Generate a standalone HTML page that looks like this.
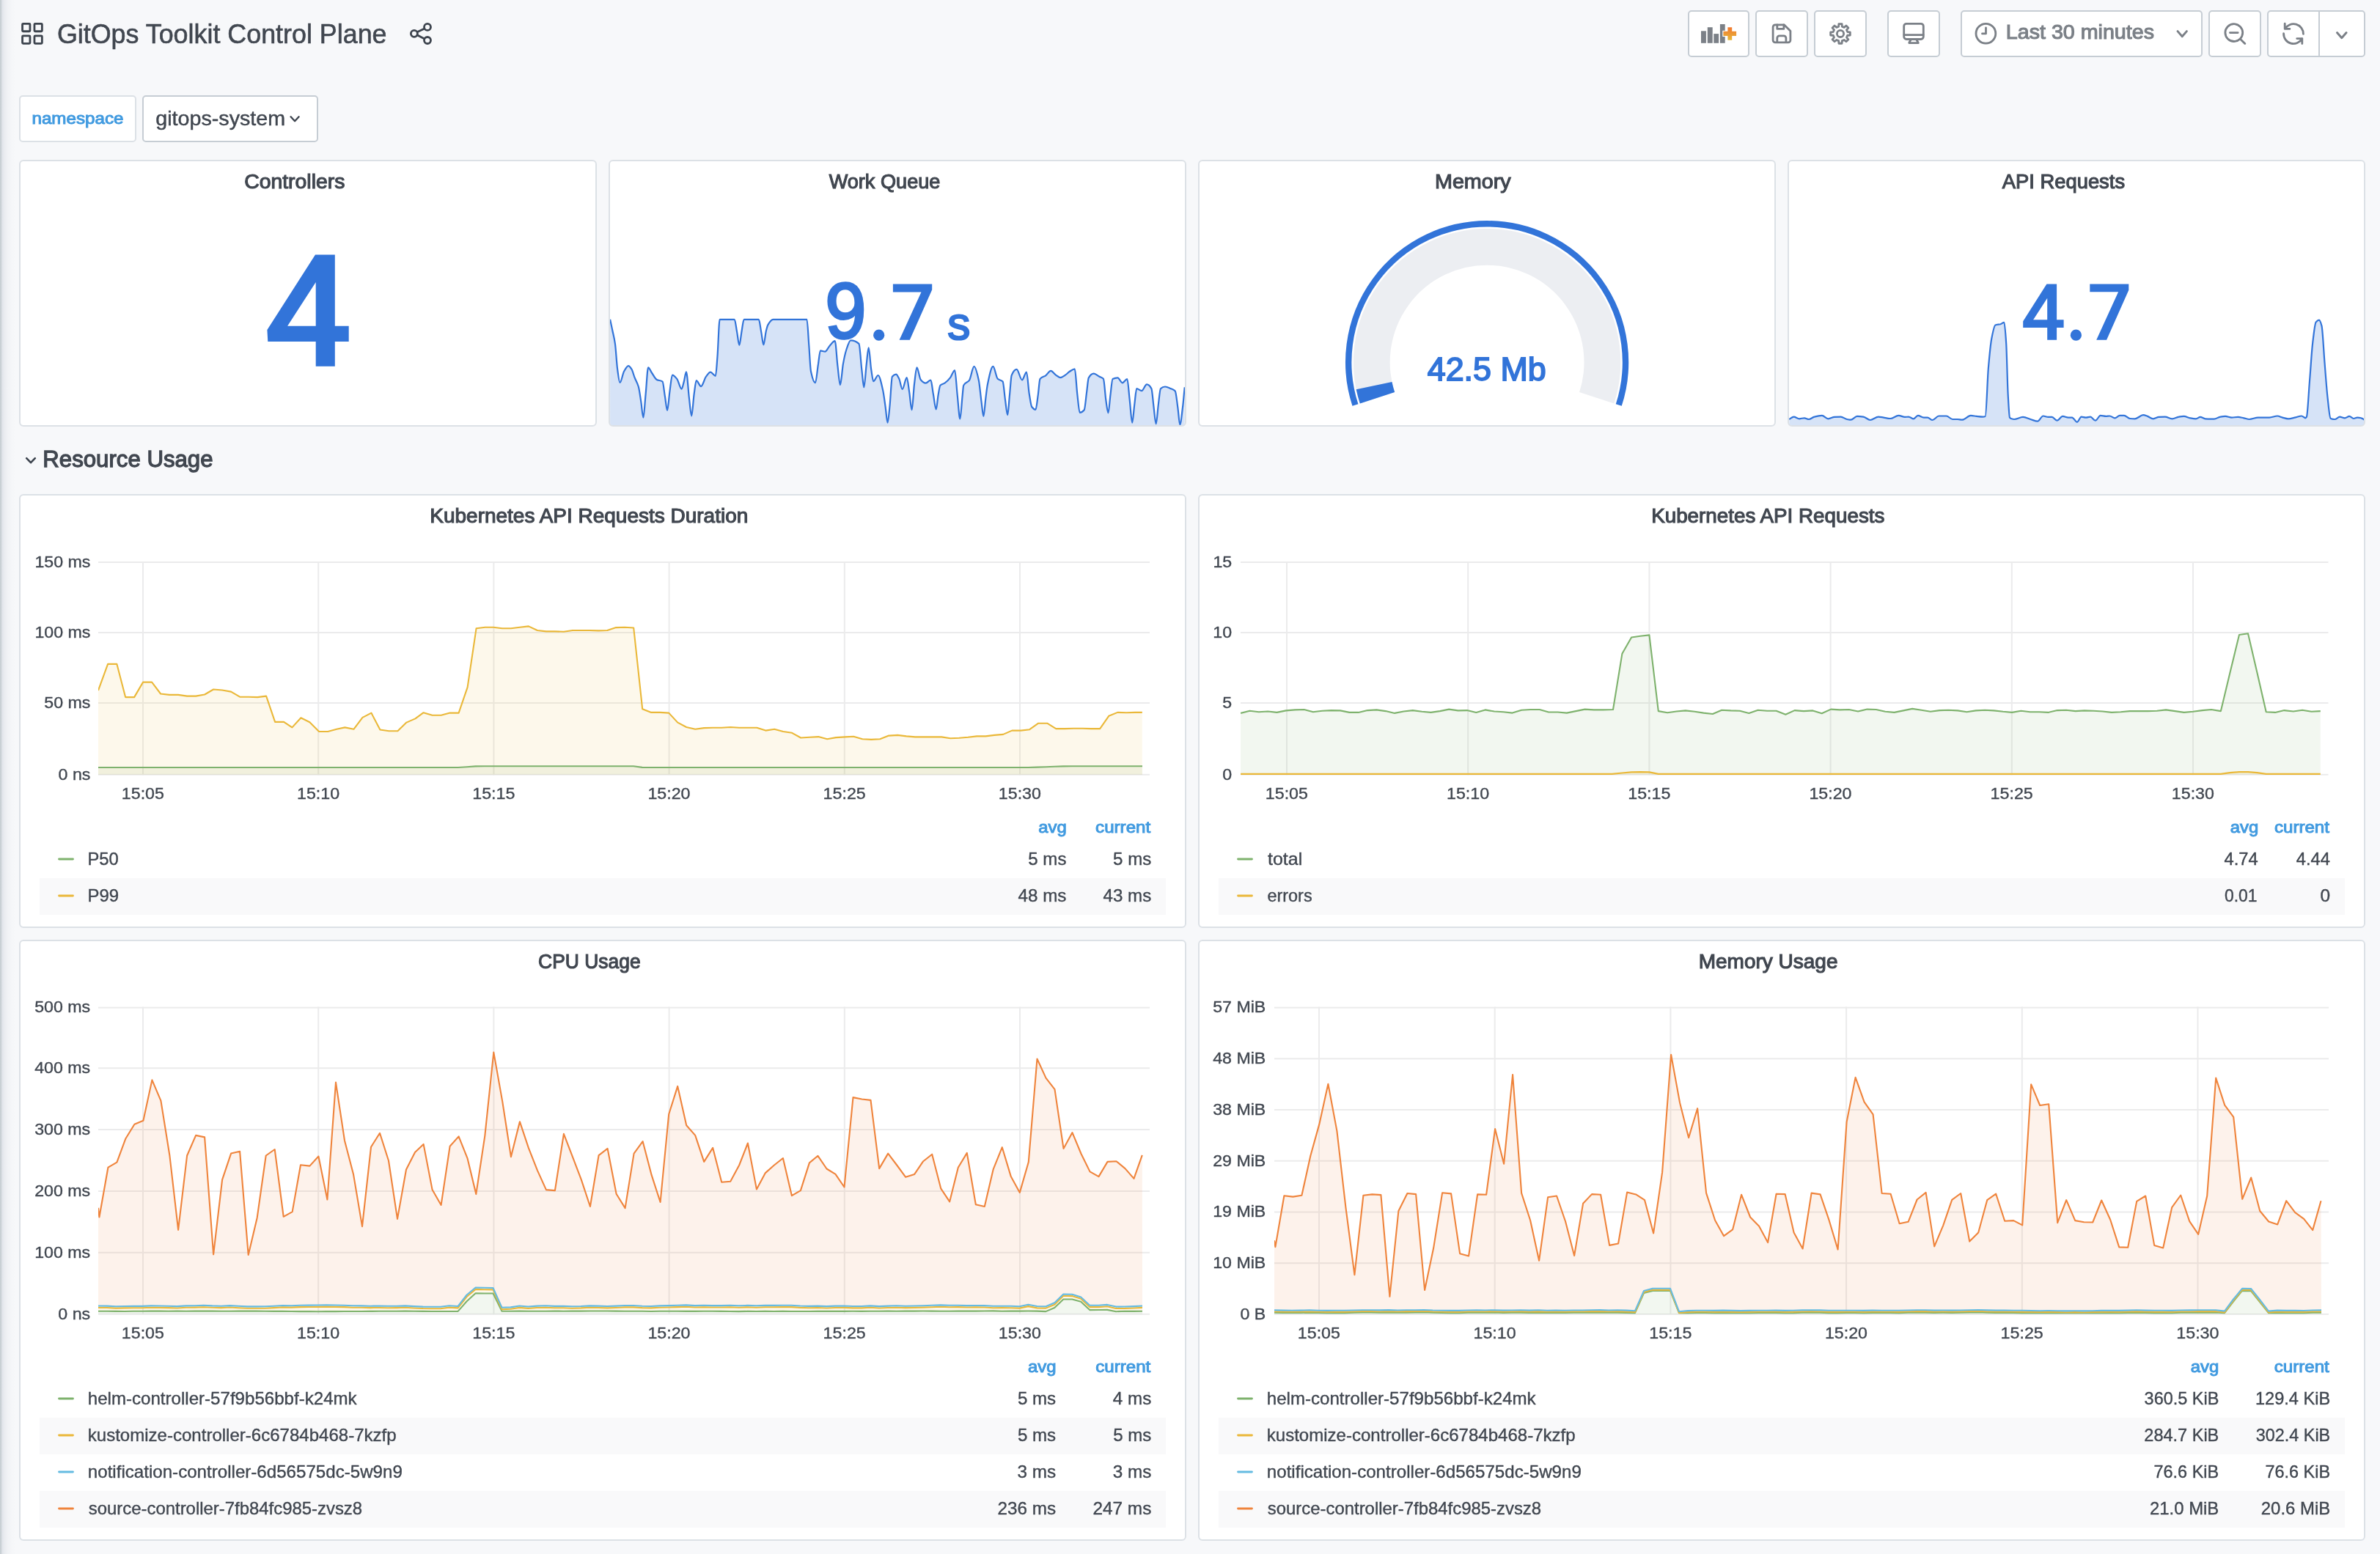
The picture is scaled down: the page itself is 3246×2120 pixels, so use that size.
<!DOCTYPE html>
<html lang="en"><head><meta charset="utf-8"><title>GitOps Toolkit Control Plane - Grafana</title>
<style>
html,body{margin:0;padding:0}
body{width:3246px;height:2120px;overflow:hidden;background:#f7f8fa;font-family:"Liberation Sans",sans-serif;position:relative}
.b{position:absolute;box-sizing:content-box}
.t{position:absolute;left:0;top:0;white-space:nowrap;line-height:1;transform-origin:0 0}
#gfx{position:absolute;left:0;top:0}
#txt{position:absolute;left:0;top:0;width:3246px;height:2120px;will-change:transform}
#edge{position:absolute;left:0;top:0;width:24px;height:2120px;background:linear-gradient(to right,rgba(150,165,172,.48) 0,rgba(150,165,172,.48) 1.5px,rgba(150,162,180,.28) 2.3px,rgba(150,162,180,.16) 5px,rgba(150,162,180,.07) 10px,rgba(150,162,180,.02) 16px,rgba(150,162,180,0) 22px)}
</style></head>
<body>
<div id="edge"></div>
<div class="b" style="left:26px;top:218px;width:784px;height:360px;border:2px solid #dce1e6;background:#fff;border-radius:6px;"></div>
<div class="b" style="left:830px;top:218px;width:784px;height:360px;border:2px solid #dce1e6;background:#fff;border-radius:6px;"></div>
<div class="b" style="left:1634px;top:218px;width:784px;height:360px;border:2px solid #dce1e6;background:#fff;border-radius:6px;"></div>
<div class="b" style="left:2438px;top:218px;width:784px;height:360px;border:2px solid #dce1e6;background:#fff;border-radius:6px;"></div>
<div class="b" style="left:26px;top:674px;width:1588px;height:588px;border:2px solid #dce1e6;background:#fff;border-radius:6px;"></div>
<div class="b" style="left:1634px;top:674px;width:1588px;height:588px;border:2px solid #dce1e6;background:#fff;border-radius:6px;"></div>
<div class="b" style="left:26px;top:1282px;width:1588px;height:816px;border:2px solid #dce1e6;background:#fff;border-radius:6px;"></div>
<div class="b" style="left:1634px;top:1282px;width:1588px;height:816px;border:2px solid #dce1e6;background:#fff;border-radius:6px;"></div>
<div class="b" style="left:2302px;top:14px;width:80px;height:60px;border:2px solid #c6cdd4;background:#fff;border-radius:5px;"></div>
<div class="b" style="left:2394px;top:14px;width:68px;height:60px;border:2px solid #c6cdd4;background:#fff;border-radius:5px;"></div>
<div class="b" style="left:2474px;top:14px;width:68px;height:60px;border:2px solid #c6cdd4;background:#fff;border-radius:5px;"></div>
<div class="b" style="left:2574px;top:14px;width:68px;height:60px;border:2px solid #c6cdd4;background:#fff;border-radius:5px;"></div>
<div class="b" style="left:2674px;top:14px;width:326px;height:60px;border:2px solid #c6cdd4;background:#fff;border-radius:5px;"></div>
<div class="b" style="left:3012px;top:14px;width:68px;height:60px;border:2px solid #c6cdd4;background:#fff;border-radius:5px;"></div>
<div class="b" style="left:3092px;top:14px;width:130px;height:60px;border:2px solid #c6cdd4;background:#fff;border-radius:5px;"></div>
<div class="b" style="left:26px;top:130px;width:156px;height:60px;border:2px solid #dce1e6;background:#fff;border-radius:5px;"></div>
<div class="b" style="left:194px;top:130px;width:236px;height:60px;border:2px solid #c6cdd4;background:#fff;border-radius:5px;"></div>
<div class="b" style="left:54px;top:1198px;width:1536px;height:50px;background:#f9f9fa"></div>
<div class="b" style="left:1662px;top:1198px;width:1536px;height:50px;background:#f9f9fa"></div>
<div class="b" style="left:54px;top:1934px;width:1536px;height:50px;background:#f9f9fa"></div>
<div class="b" style="left:54px;top:2034px;width:1536px;height:50px;background:#f9f9fa"></div>
<div class="b" style="left:1662px;top:1934px;width:1536px;height:50px;background:#f9f9fa"></div>
<div class="b" style="left:1662px;top:2034px;width:1536px;height:50px;background:#f9f9fa"></div>
<svg id="gfx" width="3246" height="2120" viewBox="0 0 3246 2120">
<rect x="30.55" y="32.35" width="10.4" height="10.4" rx="1" fill="none" stroke="#3d444e" stroke-width="2.8"/>
<rect x="46.95" y="32.35" width="10.4" height="10.4" rx="1" fill="none" stroke="#3d444e" stroke-width="2.8"/>
<rect x="30.55" y="48.95" width="10.4" height="10.4" rx="1" fill="none" stroke="#3d444e" stroke-width="2.8"/>
<rect x="46.95" y="48.95" width="10.4" height="10.4" rx="1" fill="none" stroke="#3d444e" stroke-width="2.8"/>
<g fill="none" stroke="#3d444e" stroke-width="2.8"><circle cx="583" cy="36.9" r="4.5"/><circle cx="564.9" cy="45.8" r="4.5"/><circle cx="583" cy="55" r="4.5"/><path d="M568.9 43.8L579 38.9M568.9 47.8L579 53"/></g>
<rect x="3162" y="16" width="2" height="60" fill="#c6cdd4"/>
<g fill="#7b8087"><rect x="2320" y="42.3" width="6.9" height="16.5"/><rect x="2328.8" y="37.2" width="6.9" height="21.6"/><rect x="2337.3" y="46.1" width="6.8" height="12.7"/><rect x="2345.9" y="33" width="6.8" height="25.8"/></g>
<defs><linearGradient id="og" x1="0" y1="0" x2="0" y2="1"><stop offset="0" stop-color="#f2762d"/><stop offset="1" stop-color="#e6b93b"/></linearGradient></defs>
<path d="M2356.4 37.2h5.8v5.6h5.9v6.2h-5.9v5.8h-5.8v-5.8h-6v-6.2h6z" fill="url(#og)" stroke="#fff" stroke-width="2.2" paint-order="stroke"/>
<g fill="none" stroke="#7b8087" stroke-width="2.8" stroke-linejoin="round" stroke-linecap="round"><path d="M2421.1 33.9h12.4l8.4 8.4v12.5a3 3 0 0 1-3 3h-17.8a3 3 0 0 1-3-3v-17.9a3 3 0 0 1 3-3z"/><path d="M2423.8 57.6v-5.8a3 3 0 0 1 3-3h6.1a3 3 0 0 1 3 3v5.8"/><path d="M2423.8 34v5.4h9.1v-5.4"/></g>
<path d="M2523.33 43.79 L2523.33 48.01 L2519.72 48.23 L2518.53 51.12 L2520.92 53.84 L2517.94 56.82 L2515.22 54.43 L2512.33 55.62 L2512.11 59.23 L2507.89 59.23 L2507.67 55.62 L2504.78 54.43 L2502.06 56.82 L2499.08 53.84 L2501.47 51.12 L2500.28 48.23 L2496.67 48.01 L2496.67 43.79 L2500.28 43.57 L2501.47 40.68 L2499.08 37.96 L2502.06 34.98 L2504.78 37.37 L2507.67 36.18 L2507.89 32.57 L2512.11 32.57 L2512.33 36.18 L2515.22 37.37 L2517.94 34.98 L2520.92 37.96 L2518.53 40.68 L2519.72 43.57Z" fill="none" stroke="#7b8087" stroke-width="2.8" stroke-linejoin="round"/>
<circle cx="2510" cy="45.9" r="4.6" fill="none" stroke="#7b8087" stroke-width="2.8"/>
<g fill="none" stroke="#7b8087" stroke-width="2.8" stroke-linejoin="round" stroke-linecap="round"><rect x="2596.7" y="32.3" width="26.6" height="21.2" rx="3.4"/><path d="M2597 47.6h26"/><path d="M2603.9 58.7h12.4M2606 54.4l-2.2 3.6M2614 54.4l2.2 3.6"/></g>
<g fill="none" stroke="#7b8087" stroke-width="2.8" stroke-linecap="round" stroke-linejoin="round"><circle cx="2708.4" cy="45.8" r="13.4"/><path d="M2708.5 37.9v8h-5"/></g>
<path d="M2970.0 42.6L2976.2 49.8L2982.4 42.6" fill="none" stroke="#7b8087" stroke-width="2.9" stroke-linecap="round" stroke-linejoin="round"/>
<g fill="none" stroke="#7b8087" stroke-width="2.8" stroke-linecap="round"><circle cx="3046.8" cy="44.6" r="11.9"/><path d="M3041.4 44.6h10.8M3055.4 53.2l6.4 6.4"/></g>
<g fill="none" stroke="#7b8087" stroke-width="2.8" stroke-linecap="round" stroke-linejoin="round"><path d="M3116.4 39.4A13.4 13.4 0 0 1 3141.4 46.4M3116.2 32.2V39.4H3122.9"/><path d="M3114.6 45.6A13.4 13.4 0 0 0 3139.8 52.5M3132.7 52.6H3139.8V59.6"/></g>
<path d="M3187.5 44.5L3193.8 51.7L3200.1 44.5" fill="none" stroke="#7b8087" stroke-width="2.9" stroke-linecap="round" stroke-linejoin="round"/>
<path d="M396.6 159.3L402.1 165.2L407.6 159.3" fill="none" stroke="#3d444e" stroke-width="2.4" stroke-linecap="round" stroke-linejoin="round"/>
<path d="M36.2 625.2L42.0 631.2L47.8 625.2" fill="none" stroke="#3d444e" stroke-width="2.6" stroke-linecap="round" stroke-linejoin="round"/>
<path d="M430.0 347.4 L456.8 347.4 L456.8 444.8 L475.7 444.8 L475.7 466.1 L456.8 466.1 L456.8 499.8 L430.7 499.8 L430.7 466.1 L365.3 466.1 L364.4 450.0Z M430.7 385.0 L430.7 444.8 L392.1 444.8Z" fill="#3274d9" fill-rule="evenodd"/>
<clipPath id="clip_wq"><rect x="832" y="220" width="784" height="360" rx="4"/></clipPath>
<g clip-path="url(#clip_wq)"><path d="M832.1 435.8C833.2 441.1 834.4 446.2 835.5 451.7C836.7 457.2 837.8 460.9 838.9 468.9C840.0 476.1 841.0 495.8 842.1 503.4C843.2 511.8 844.3 522.0 845.5 522.0C847.3 522.0 849.2 510.0 851.0 506.8C853.0 503.3 855.0 499.1 857.0 499.1C858.5 499.1 859.9 501.2 861.3 503.4C862.8 505.5 864.2 511.8 865.7 515.4C867.4 519.8 869.1 521.5 870.8 527.5C872.0 531.5 873.1 540.7 874.3 548.2C875.3 554.8 876.3 569.7 877.4 569.7C878.5 569.7 879.5 548.9 880.6 537.8C881.8 526.2 882.9 501.3 884.1 501.3C885.7 501.3 887.3 506.2 888.9 508.5C891.2 511.8 893.5 516.8 895.8 518.0C898.4 519.4 901.0 518.7 903.6 520.6C904.7 521.4 905.8 534.4 907.0 541.3C908.0 547.5 909.1 559.9 910.1 559.9C911.2 559.9 912.3 542.0 913.4 534.4C914.6 526.0 915.8 511.6 917.0 511.6C919.1 511.6 921.2 514.5 923.4 517.1C925.4 519.7 927.5 530.6 929.6 530.6C930.7 530.6 931.7 524.5 932.8 520.6C933.9 516.9 934.9 507.3 935.9 507.3C937.2 507.3 938.5 530.9 939.7 541.3C940.9 550.7 942.0 567.4 943.2 567.4C944.3 567.4 945.5 545.9 946.6 537.8C947.7 530.5 948.7 519.2 949.7 519.2C951.8 519.2 954.0 527.1 956.1 527.1C958.4 527.1 960.7 516.7 963.0 513.7C965.0 511.1 967.0 507.7 969.0 507.7C971.3 507.7 973.6 512.8 975.9 512.8C976.8 512.8 977.6 496.9 978.5 486.1C979.5 473.2 980.6 435.8 981.6 435.8C988.3 435.8 995.0 435.8 1001.7 435.8C1002.9 435.8 1004.0 447.2 1005.2 453.4C1006.2 459.0 1007.3 471.0 1008.3 471.0C1009.4 471.0 1010.5 457.7 1011.6 451.7C1012.6 446.0 1013.6 435.8 1014.7 435.8C1021.4 435.8 1028.1 435.8 1034.8 435.8C1036.0 435.8 1037.1 447.4 1038.3 453.4C1039.3 458.9 1040.3 470.3 1041.4 470.3C1042.5 470.3 1043.7 456.4 1044.8 451.7C1045.7 448.2 1046.5 444.6 1047.4 443.1C1049.7 439.1 1052.0 435.8 1054.3 435.8C1069.7 435.8 1085.1 435.8 1100.5 435.8C1101.4 435.8 1102.4 459.8 1103.4 472.4C1104.2 483.5 1105.1 502.7 1106.0 506.8C1108.0 516.3 1110.0 522.3 1112.0 522.3C1113.3 522.3 1114.6 504.8 1116.0 496.5C1116.9 490.3 1117.9 478.4 1118.9 478.4C1121.0 478.4 1123.1 479.6 1125.3 479.6C1127.4 479.6 1129.6 473.8 1131.8 471.5C1134.1 469.1 1136.4 465.1 1138.7 465.1C1140.0 465.1 1141.2 489.7 1142.5 499.9C1143.6 509.2 1144.8 525.1 1145.9 525.1C1147.3 525.1 1148.6 503.7 1149.9 496.5C1151.3 488.6 1152.8 481.8 1154.2 477.5C1156.2 471.5 1158.2 464.3 1160.2 464.3C1164.0 464.3 1167.7 465.4 1171.4 468.9C1172.7 470.1 1174.0 492.6 1175.2 503.4C1176.3 512.2 1177.3 528.3 1178.3 528.3C1179.5 528.3 1180.6 506.0 1181.8 496.5C1182.7 488.4 1183.7 474.4 1184.7 474.4C1185.8 474.4 1187.0 495.8 1188.1 503.4C1189.2 510.2 1190.2 520.2 1191.2 520.2C1193.4 520.2 1195.5 512.0 1197.6 512.0C1199.8 512.0 1202.0 523.0 1204.2 532.6C1205.3 537.7 1206.5 547.1 1207.6 555.0C1208.6 561.8 1209.5 576.6 1210.5 576.6C1211.5 576.6 1212.5 563.9 1213.4 555.0C1214.6 544.6 1215.7 515.1 1216.9 513.7C1218.6 511.6 1220.3 510.6 1222.1 510.6C1223.5 510.6 1224.9 514.2 1226.4 517.1C1227.8 520.1 1229.2 530.9 1230.7 530.9C1232.7 530.9 1234.7 515.1 1236.7 515.1C1237.9 515.1 1239.0 527.1 1240.1 534.4C1241.3 541.6 1242.4 559.3 1243.6 559.3C1244.7 559.3 1245.9 533.3 1247.0 524.0C1248.2 514.8 1249.3 501.3 1250.5 501.3C1252.2 501.3 1253.9 516.0 1255.7 518.0C1257.9 520.7 1260.2 522.7 1262.5 522.7C1264.8 522.7 1267.1 518.5 1269.4 518.5C1270.6 518.5 1271.7 531.5 1272.9 537.8C1274.1 544.8 1275.4 558.5 1276.7 558.5C1277.7 558.5 1278.7 543.5 1279.8 537.8C1280.6 533.1 1281.5 526.6 1282.4 525.8C1284.4 523.7 1286.4 524.0 1288.4 522.7C1291.0 520.9 1293.6 518.3 1296.1 515.1C1298.1 512.6 1300.2 505.1 1302.2 505.1C1303.3 505.1 1304.5 527.3 1305.6 537.8C1306.9 549.4 1308.1 571.4 1309.4 571.4C1310.4 571.4 1311.5 550.9 1312.5 541.3C1313.1 535.9 1313.6 526.9 1314.2 525.8C1316.8 520.7 1319.4 522.4 1322.0 518.9C1324.2 515.9 1326.3 499.9 1328.5 499.9C1330.6 499.9 1332.8 509.2 1334.9 518.9C1336.0 524.1 1337.2 537.9 1338.3 546.4C1339.4 554.1 1340.4 568.0 1341.4 568.0C1342.4 568.0 1343.4 550.7 1344.4 543.0C1345.2 536.2 1346.1 528.2 1347.0 524.0C1349.4 512.2 1351.9 499.9 1354.4 499.9C1356.5 499.9 1358.6 514.8 1360.7 516.8C1363.0 518.9 1365.3 518.0 1367.6 520.6C1368.8 521.9 1369.9 538.5 1371.1 546.4C1372.1 553.6 1373.1 566.2 1374.2 566.2C1375.1 566.2 1376.1 547.4 1377.1 537.8C1378.0 529.3 1378.8 514.0 1379.7 512.0C1382.0 506.5 1384.3 503.9 1386.6 503.9C1389.0 503.9 1391.5 518.3 1394.0 518.3C1396.0 518.3 1398.0 507.7 1400.0 507.7C1401.3 507.7 1402.5 530.1 1403.8 537.8C1405.0 544.8 1406.1 553.5 1407.2 555.0C1409.0 557.4 1410.7 558.8 1412.4 558.8C1413.6 558.8 1414.7 545.8 1415.9 537.8C1416.7 531.8 1417.6 518.3 1418.4 517.1C1421.0 513.7 1423.6 514.2 1426.2 512.3C1428.5 510.6 1430.8 505.9 1433.1 505.9C1435.4 505.9 1437.7 510.1 1440.0 511.6C1442.0 513.0 1444.0 515.1 1446.0 515.1C1448.3 515.1 1450.6 513.1 1452.9 511.6C1454.9 510.4 1456.9 508.0 1458.9 506.8C1461.2 505.4 1463.5 503.4 1465.8 503.4C1467.0 503.4 1468.1 528.2 1469.3 537.8C1470.4 547.5 1471.6 562.8 1472.7 562.8C1474.7 562.8 1476.7 561.7 1478.7 559.3C1479.9 558.0 1481.0 542.7 1482.2 534.4C1483.0 528.1 1483.9 516.9 1484.8 515.4C1487.1 511.4 1489.4 509.6 1491.7 509.6C1494.2 509.6 1496.8 512.3 1499.4 513.7C1501.2 514.7 1503.1 514.7 1504.9 516.8C1506.1 518.1 1507.2 538.8 1508.4 546.4C1509.4 553.3 1510.4 563.3 1511.5 563.3C1512.5 563.3 1513.5 545.7 1514.6 537.8C1515.5 530.4 1516.5 517.7 1517.5 517.1C1519.8 515.9 1522.1 515.4 1524.4 515.4C1526.5 515.4 1528.6 522.3 1530.8 522.3C1532.9 522.3 1535.1 517.1 1537.3 517.1C1538.5 517.1 1539.6 536.5 1540.8 546.4C1541.9 556.3 1543.1 576.6 1544.2 576.6C1545.2 576.6 1546.3 559.5 1547.3 551.6C1548.3 544.1 1549.3 530.1 1550.2 530.1C1552.5 530.1 1554.8 533.2 1557.1 533.2C1559.4 533.2 1561.7 524.4 1564.0 524.4C1566.1 524.4 1568.3 526.3 1570.4 530.1C1571.4 531.9 1572.5 547.0 1573.5 555.0C1574.5 563.1 1575.6 578.3 1576.6 578.3C1577.7 578.3 1578.8 559.8 1579.9 551.6C1580.9 543.8 1581.9 531.0 1583.0 530.1C1585.0 528.3 1587.0 527.5 1589.0 527.5C1591.6 527.5 1594.2 529.0 1596.7 530.1C1598.8 530.9 1600.8 531.2 1602.8 533.5C1603.9 534.8 1605.1 547.1 1606.2 555.0C1607.3 562.2 1608.3 579.2 1609.3 579.2C1610.6 579.2 1611.8 565.1 1613.1 555.0C1614.0 548.2 1614.8 537.2 1615.7 528.3 L1615.7 582.0 L832.1 582.0 Z" fill="#3274d9" fill-opacity="0.2"/><path d="M832.1 435.8C833.2 441.1 834.4 446.2 835.5 451.7C836.7 457.2 837.8 460.9 838.9 468.9C840.0 476.1 841.0 495.8 842.1 503.4C843.2 511.8 844.3 522.0 845.5 522.0C847.3 522.0 849.2 510.0 851.0 506.8C853.0 503.3 855.0 499.1 857.0 499.1C858.5 499.1 859.9 501.2 861.3 503.4C862.8 505.5 864.2 511.8 865.7 515.4C867.4 519.8 869.1 521.5 870.8 527.5C872.0 531.5 873.1 540.7 874.3 548.2C875.3 554.8 876.3 569.7 877.4 569.7C878.5 569.7 879.5 548.9 880.6 537.8C881.8 526.2 882.9 501.3 884.1 501.3C885.7 501.3 887.3 506.2 888.9 508.5C891.2 511.8 893.5 516.8 895.8 518.0C898.4 519.4 901.0 518.7 903.6 520.6C904.7 521.4 905.8 534.4 907.0 541.3C908.0 547.5 909.1 559.9 910.1 559.9C911.2 559.9 912.3 542.0 913.4 534.4C914.6 526.0 915.8 511.6 917.0 511.6C919.1 511.6 921.2 514.5 923.4 517.1C925.4 519.7 927.5 530.6 929.6 530.6C930.7 530.6 931.7 524.5 932.8 520.6C933.9 516.9 934.9 507.3 935.9 507.3C937.2 507.3 938.5 530.9 939.7 541.3C940.9 550.7 942.0 567.4 943.2 567.4C944.3 567.4 945.5 545.9 946.6 537.8C947.7 530.5 948.7 519.2 949.7 519.2C951.8 519.2 954.0 527.1 956.1 527.1C958.4 527.1 960.7 516.7 963.0 513.7C965.0 511.1 967.0 507.7 969.0 507.7C971.3 507.7 973.6 512.8 975.9 512.8C976.8 512.8 977.6 496.9 978.5 486.1C979.5 473.2 980.6 435.8 981.6 435.8C988.3 435.8 995.0 435.8 1001.7 435.8C1002.9 435.8 1004.0 447.2 1005.2 453.4C1006.2 459.0 1007.3 471.0 1008.3 471.0C1009.4 471.0 1010.5 457.7 1011.6 451.7C1012.6 446.0 1013.6 435.8 1014.7 435.8C1021.4 435.8 1028.1 435.8 1034.8 435.8C1036.0 435.8 1037.1 447.4 1038.3 453.4C1039.3 458.9 1040.3 470.3 1041.4 470.3C1042.5 470.3 1043.7 456.4 1044.8 451.7C1045.7 448.2 1046.5 444.6 1047.4 443.1C1049.7 439.1 1052.0 435.8 1054.3 435.8C1069.7 435.8 1085.1 435.8 1100.5 435.8C1101.4 435.8 1102.4 459.8 1103.4 472.4C1104.2 483.5 1105.1 502.7 1106.0 506.8C1108.0 516.3 1110.0 522.3 1112.0 522.3C1113.3 522.3 1114.6 504.8 1116.0 496.5C1116.9 490.3 1117.9 478.4 1118.9 478.4C1121.0 478.4 1123.1 479.6 1125.3 479.6C1127.4 479.6 1129.6 473.8 1131.8 471.5C1134.1 469.1 1136.4 465.1 1138.7 465.1C1140.0 465.1 1141.2 489.7 1142.5 499.9C1143.6 509.2 1144.8 525.1 1145.9 525.1C1147.3 525.1 1148.6 503.7 1149.9 496.5C1151.3 488.6 1152.8 481.8 1154.2 477.5C1156.2 471.5 1158.2 464.3 1160.2 464.3C1164.0 464.3 1167.7 465.4 1171.4 468.9C1172.7 470.1 1174.0 492.6 1175.2 503.4C1176.3 512.2 1177.3 528.3 1178.3 528.3C1179.5 528.3 1180.6 506.0 1181.8 496.5C1182.7 488.4 1183.7 474.4 1184.7 474.4C1185.8 474.4 1187.0 495.8 1188.1 503.4C1189.2 510.2 1190.2 520.2 1191.2 520.2C1193.4 520.2 1195.5 512.0 1197.6 512.0C1199.8 512.0 1202.0 523.0 1204.2 532.6C1205.3 537.7 1206.5 547.1 1207.6 555.0C1208.6 561.8 1209.5 576.6 1210.5 576.6C1211.5 576.6 1212.5 563.9 1213.4 555.0C1214.6 544.6 1215.7 515.1 1216.9 513.7C1218.6 511.6 1220.3 510.6 1222.1 510.6C1223.5 510.6 1224.9 514.2 1226.4 517.1C1227.8 520.1 1229.2 530.9 1230.7 530.9C1232.7 530.9 1234.7 515.1 1236.7 515.1C1237.9 515.1 1239.0 527.1 1240.1 534.4C1241.3 541.6 1242.4 559.3 1243.6 559.3C1244.7 559.3 1245.9 533.3 1247.0 524.0C1248.2 514.8 1249.3 501.3 1250.5 501.3C1252.2 501.3 1253.9 516.0 1255.7 518.0C1257.9 520.7 1260.2 522.7 1262.5 522.7C1264.8 522.7 1267.1 518.5 1269.4 518.5C1270.6 518.5 1271.7 531.5 1272.9 537.8C1274.1 544.8 1275.4 558.5 1276.7 558.5C1277.7 558.5 1278.7 543.5 1279.8 537.8C1280.6 533.1 1281.5 526.6 1282.4 525.8C1284.4 523.7 1286.4 524.0 1288.4 522.7C1291.0 520.9 1293.6 518.3 1296.1 515.1C1298.1 512.6 1300.2 505.1 1302.2 505.1C1303.3 505.1 1304.5 527.3 1305.6 537.8C1306.9 549.4 1308.1 571.4 1309.4 571.4C1310.4 571.4 1311.5 550.9 1312.5 541.3C1313.1 535.9 1313.6 526.9 1314.2 525.8C1316.8 520.7 1319.4 522.4 1322.0 518.9C1324.2 515.9 1326.3 499.9 1328.5 499.9C1330.6 499.9 1332.8 509.2 1334.9 518.9C1336.0 524.1 1337.2 537.9 1338.3 546.4C1339.4 554.1 1340.4 568.0 1341.4 568.0C1342.4 568.0 1343.4 550.7 1344.4 543.0C1345.2 536.2 1346.1 528.2 1347.0 524.0C1349.4 512.2 1351.9 499.9 1354.4 499.9C1356.5 499.9 1358.6 514.8 1360.7 516.8C1363.0 518.9 1365.3 518.0 1367.6 520.6C1368.8 521.9 1369.9 538.5 1371.1 546.4C1372.1 553.6 1373.1 566.2 1374.2 566.2C1375.1 566.2 1376.1 547.4 1377.1 537.8C1378.0 529.3 1378.8 514.0 1379.7 512.0C1382.0 506.5 1384.3 503.9 1386.6 503.9C1389.0 503.9 1391.5 518.3 1394.0 518.3C1396.0 518.3 1398.0 507.7 1400.0 507.7C1401.3 507.7 1402.5 530.1 1403.8 537.8C1405.0 544.8 1406.1 553.5 1407.2 555.0C1409.0 557.4 1410.7 558.8 1412.4 558.8C1413.6 558.8 1414.7 545.8 1415.9 537.8C1416.7 531.8 1417.6 518.3 1418.4 517.1C1421.0 513.7 1423.6 514.2 1426.2 512.3C1428.5 510.6 1430.8 505.9 1433.1 505.9C1435.4 505.9 1437.7 510.1 1440.0 511.6C1442.0 513.0 1444.0 515.1 1446.0 515.1C1448.3 515.1 1450.6 513.1 1452.9 511.6C1454.9 510.4 1456.9 508.0 1458.9 506.8C1461.2 505.4 1463.5 503.4 1465.8 503.4C1467.0 503.4 1468.1 528.2 1469.3 537.8C1470.4 547.5 1471.6 562.8 1472.7 562.8C1474.7 562.8 1476.7 561.7 1478.7 559.3C1479.9 558.0 1481.0 542.7 1482.2 534.4C1483.0 528.1 1483.9 516.9 1484.8 515.4C1487.1 511.4 1489.4 509.6 1491.7 509.6C1494.2 509.6 1496.8 512.3 1499.4 513.7C1501.2 514.7 1503.1 514.7 1504.9 516.8C1506.1 518.1 1507.2 538.8 1508.4 546.4C1509.4 553.3 1510.4 563.3 1511.5 563.3C1512.5 563.3 1513.5 545.7 1514.6 537.8C1515.5 530.4 1516.5 517.7 1517.5 517.1C1519.8 515.9 1522.1 515.4 1524.4 515.4C1526.5 515.4 1528.6 522.3 1530.8 522.3C1532.9 522.3 1535.1 517.1 1537.3 517.1C1538.5 517.1 1539.6 536.5 1540.8 546.4C1541.9 556.3 1543.1 576.6 1544.2 576.6C1545.2 576.6 1546.3 559.5 1547.3 551.6C1548.3 544.1 1549.3 530.1 1550.2 530.1C1552.5 530.1 1554.8 533.2 1557.1 533.2C1559.4 533.2 1561.7 524.4 1564.0 524.4C1566.1 524.4 1568.3 526.3 1570.4 530.1C1571.4 531.9 1572.5 547.0 1573.5 555.0C1574.5 563.1 1575.6 578.3 1576.6 578.3C1577.7 578.3 1578.8 559.8 1579.9 551.6C1580.9 543.8 1581.9 531.0 1583.0 530.1C1585.0 528.3 1587.0 527.5 1589.0 527.5C1591.6 527.5 1594.2 529.0 1596.7 530.1C1598.8 530.9 1600.8 531.2 1602.8 533.5C1603.9 534.8 1605.1 547.1 1606.2 555.0C1607.3 562.2 1608.3 579.2 1609.3 579.2C1610.6 579.2 1611.8 565.1 1613.1 555.0C1614.0 548.2 1614.8 537.2 1615.7 528.3" fill="none" stroke="#3274d9" stroke-width="2.2" stroke-linejoin="round"/></g>
<clipPath id="clip_api"><rect x="2440" y="220" width="784" height="360" rx="4"/></clipPath>
<g clip-path="url(#clip_api)"><path d="M2440.3 572.0C2442.3 570.9 2444.4 568.6 2446.5 568.6C2449.0 568.6 2451.5 571.3 2454.0 571.3C2456.3 571.3 2458.6 570.3 2460.9 570.3C2462.9 570.3 2465.0 572.0 2467.0 572.0C2469.5 572.0 2472.1 569.2 2474.6 568.6C2478.0 567.7 2481.4 566.9 2484.9 566.9C2487.7 566.9 2490.6 571.3 2493.4 571.3C2496.3 571.3 2499.1 569.1 2502.0 568.9C2504.9 568.7 2507.7 568.6 2510.6 568.6C2513.4 568.6 2516.3 571.5 2519.1 572.0C2520.9 572.3 2522.6 572.7 2524.3 572.7C2527.1 572.7 2530.0 567.9 2532.9 567.9C2535.7 567.9 2538.6 568.2 2541.4 568.6C2544.5 569.0 2547.6 573.0 2550.7 573.0C2554.5 573.0 2558.2 568.6 2562.0 568.6C2564.3 568.6 2566.6 569.3 2568.9 569.6C2571.9 570.1 2575.0 571.0 2578.1 571.0C2581.9 571.0 2585.7 566.9 2589.4 566.9C2592.3 566.9 2595.1 568.9 2598.0 568.9C2599.7 568.9 2601.4 568.6 2603.1 568.6C2605.4 568.6 2607.7 571.3 2610.0 571.3C2611.9 571.3 2613.9 566.9 2615.8 566.9C2618.5 566.9 2621.1 569.6 2623.7 569.6C2625.4 569.6 2627.1 569.6 2628.9 569.6C2631.1 569.6 2633.4 573.0 2635.7 573.0C2638.6 573.0 2641.4 567.5 2644.3 567.5C2647.7 567.5 2651.1 567.5 2654.6 567.5C2657.4 567.5 2660.3 572.0 2663.1 572.0C2665.4 572.0 2667.7 572.0 2670.0 572.0C2672.1 572.0 2674.1 572.7 2676.2 572.7C2680.1 572.7 2683.9 566.9 2687.8 566.9C2690.5 566.9 2693.1 567.6 2695.7 567.9C2698.6 568.2 2701.4 568.6 2704.3 568.6C2705.4 568.6 2706.6 568.4 2707.7 568.0C2709.1 567.6 2710.5 518.9 2711.8 502.9C2713.3 485.5 2714.8 469.4 2716.3 461.7C2718.0 452.9 2719.7 444.2 2721.4 443.5C2723.7 442.6 2726.0 442.8 2728.3 442.2C2730.0 441.7 2731.7 439.8 2733.4 439.8C2734.3 439.8 2735.3 454.4 2736.2 468.6C2737.0 481.0 2737.8 522.4 2738.6 537.1C2739.4 551.9 2740.2 568.7 2741.0 569.7C2741.5 570.5 2742.1 570.8 2742.7 571.0C2744.2 571.5 2745.7 572.0 2747.1 572.0C2751.1 572.0 2755.1 568.9 2759.1 568.9C2762.6 568.9 2766.0 571.0 2769.4 572.0C2772.6 572.9 2775.8 574.7 2779.0 574.7C2781.5 574.7 2784.1 567.5 2786.6 567.5C2788.9 567.5 2791.1 568.9 2793.4 568.9C2795.1 568.9 2796.9 568.9 2798.6 568.9C2800.9 568.9 2803.1 573.7 2805.4 573.7C2808.1 573.7 2810.7 567.9 2813.3 567.9C2815.8 567.9 2818.3 569.6 2820.9 569.6C2822.6 569.6 2824.3 569.6 2826.0 569.6C2828.3 569.6 2830.6 575.8 2832.9 575.8C2834.8 575.8 2836.7 568.6 2838.7 568.6C2840.7 568.6 2842.8 569.6 2844.9 569.6C2846.9 569.6 2849.0 568.6 2851.0 568.6C2853.3 568.6 2855.6 573.7 2857.9 573.7C2860.2 573.7 2862.5 566.9 2864.7 566.9C2867.3 566.9 2869.8 567.9 2872.3 567.9C2874.0 567.9 2875.7 567.5 2877.4 567.5C2879.7 567.5 2882.0 570.3 2884.3 570.3C2886.6 570.3 2888.9 566.9 2891.1 566.9C2893.1 566.9 2895.0 566.9 2897.0 566.9C2899.6 566.9 2902.2 570.7 2904.9 571.0C2907.1 571.2 2909.4 571.3 2911.7 571.3C2915.5 571.3 2919.3 566.2 2923.0 566.2C2925.0 566.2 2926.9 567.2 2928.9 567.9C2931.5 568.8 2934.1 571.3 2936.7 571.3C2939.3 571.3 2941.8 569.1 2944.3 568.9C2947.1 568.7 2950.0 568.6 2952.9 568.6C2956.1 568.6 2959.3 571.3 2962.5 571.3C2965.5 571.3 2968.6 569.0 2971.7 568.6C2974.0 568.2 2976.3 567.9 2978.6 567.9C2981.4 567.9 2984.3 569.8 2987.1 570.3C2989.8 570.8 2992.4 571.3 2995.0 571.3C2997.0 571.3 2998.9 568.9 3000.9 568.9C3003.1 568.9 3005.4 571.2 3007.7 571.3C3011.7 571.5 3015.7 571.7 3019.7 571.7C3022.6 571.7 3025.4 569.0 3028.3 568.6C3030.6 568.2 3032.9 567.9 3035.1 567.9C3038.0 567.9 3040.9 569.6 3043.7 569.6C3046.6 569.6 3049.4 568.9 3052.3 568.9C3054.9 568.9 3057.5 569.8 3060.2 570.3C3062.7 570.8 3065.2 572.0 3067.7 572.0C3071.7 572.0 3075.7 569.6 3079.7 569.6C3084.9 569.6 3090.0 569.6 3095.1 569.6C3098.8 569.6 3102.5 567.5 3106.1 567.5C3108.4 567.5 3110.7 569.0 3113.0 569.6C3115.6 570.3 3118.2 571.3 3120.9 571.3C3124.3 571.3 3127.7 570.0 3131.1 569.3C3133.8 568.7 3136.4 567.5 3139.0 567.5C3140.9 567.5 3142.7 570.3 3144.5 570.3C3145.0 570.3 3145.4 569.5 3145.9 568.7C3147.3 566.1 3148.6 536.7 3150.0 520.0C3151.4 503.3 3152.7 480.4 3154.1 468.6C3155.6 455.8 3157.1 441.1 3158.6 439.4C3160.1 437.8 3161.5 436.7 3163.0 436.7C3164.2 436.7 3165.3 440.2 3166.5 444.6C3167.8 449.8 3169.2 479.4 3170.6 496.0C3171.9 512.6 3173.3 531.9 3174.7 544.0C3175.9 555.0 3177.2 569.9 3178.5 570.7C3179.3 571.3 3180.1 571.5 3180.9 571.7C3182.0 571.8 3183.1 572.0 3184.3 572.0C3186.6 572.0 3188.9 568.6 3191.1 568.6C3193.4 568.6 3195.7 570.3 3198.0 570.3C3200.1 570.3 3202.1 567.9 3204.2 567.9C3206.1 567.9 3208.1 571.0 3210.0 571.0C3211.7 571.0 3213.4 569.6 3215.1 569.6C3216.9 569.6 3218.6 569.9 3220.3 570.3C3221.8 570.6 3223.3 571.9 3224.7 572.7 L3224.7 582.0 L2440.3 582.0 Z" fill="#3274d9" fill-opacity="0.2"/><path d="M2440.3 572.0C2442.3 570.9 2444.4 568.6 2446.5 568.6C2449.0 568.6 2451.5 571.3 2454.0 571.3C2456.3 571.3 2458.6 570.3 2460.9 570.3C2462.9 570.3 2465.0 572.0 2467.0 572.0C2469.5 572.0 2472.1 569.2 2474.6 568.6C2478.0 567.7 2481.4 566.9 2484.9 566.9C2487.7 566.9 2490.6 571.3 2493.4 571.3C2496.3 571.3 2499.1 569.1 2502.0 568.9C2504.9 568.7 2507.7 568.6 2510.6 568.6C2513.4 568.6 2516.3 571.5 2519.1 572.0C2520.9 572.3 2522.6 572.7 2524.3 572.7C2527.1 572.7 2530.0 567.9 2532.9 567.9C2535.7 567.9 2538.6 568.2 2541.4 568.6C2544.5 569.0 2547.6 573.0 2550.7 573.0C2554.5 573.0 2558.2 568.6 2562.0 568.6C2564.3 568.6 2566.6 569.3 2568.9 569.6C2571.9 570.1 2575.0 571.0 2578.1 571.0C2581.9 571.0 2585.7 566.9 2589.4 566.9C2592.3 566.9 2595.1 568.9 2598.0 568.9C2599.7 568.9 2601.4 568.6 2603.1 568.6C2605.4 568.6 2607.7 571.3 2610.0 571.3C2611.9 571.3 2613.9 566.9 2615.8 566.9C2618.5 566.9 2621.1 569.6 2623.7 569.6C2625.4 569.6 2627.1 569.6 2628.9 569.6C2631.1 569.6 2633.4 573.0 2635.7 573.0C2638.6 573.0 2641.4 567.5 2644.3 567.5C2647.7 567.5 2651.1 567.5 2654.6 567.5C2657.4 567.5 2660.3 572.0 2663.1 572.0C2665.4 572.0 2667.7 572.0 2670.0 572.0C2672.1 572.0 2674.1 572.7 2676.2 572.7C2680.1 572.7 2683.9 566.9 2687.8 566.9C2690.5 566.9 2693.1 567.6 2695.7 567.9C2698.6 568.2 2701.4 568.6 2704.3 568.6C2705.4 568.6 2706.6 568.4 2707.7 568.0C2709.1 567.6 2710.5 518.9 2711.8 502.9C2713.3 485.5 2714.8 469.4 2716.3 461.7C2718.0 452.9 2719.7 444.2 2721.4 443.5C2723.7 442.6 2726.0 442.8 2728.3 442.2C2730.0 441.7 2731.7 439.8 2733.4 439.8C2734.3 439.8 2735.3 454.4 2736.2 468.6C2737.0 481.0 2737.8 522.4 2738.6 537.1C2739.4 551.9 2740.2 568.7 2741.0 569.7C2741.5 570.5 2742.1 570.8 2742.7 571.0C2744.2 571.5 2745.7 572.0 2747.1 572.0C2751.1 572.0 2755.1 568.9 2759.1 568.9C2762.6 568.9 2766.0 571.0 2769.4 572.0C2772.6 572.9 2775.8 574.7 2779.0 574.7C2781.5 574.7 2784.1 567.5 2786.6 567.5C2788.9 567.5 2791.1 568.9 2793.4 568.9C2795.1 568.9 2796.9 568.9 2798.6 568.9C2800.9 568.9 2803.1 573.7 2805.4 573.7C2808.1 573.7 2810.7 567.9 2813.3 567.9C2815.8 567.9 2818.3 569.6 2820.9 569.6C2822.6 569.6 2824.3 569.6 2826.0 569.6C2828.3 569.6 2830.6 575.8 2832.9 575.8C2834.8 575.8 2836.7 568.6 2838.7 568.6C2840.7 568.6 2842.8 569.6 2844.9 569.6C2846.9 569.6 2849.0 568.6 2851.0 568.6C2853.3 568.6 2855.6 573.7 2857.9 573.7C2860.2 573.7 2862.5 566.9 2864.7 566.9C2867.3 566.9 2869.8 567.9 2872.3 567.9C2874.0 567.9 2875.7 567.5 2877.4 567.5C2879.7 567.5 2882.0 570.3 2884.3 570.3C2886.6 570.3 2888.9 566.9 2891.1 566.9C2893.1 566.9 2895.0 566.9 2897.0 566.9C2899.6 566.9 2902.2 570.7 2904.9 571.0C2907.1 571.2 2909.4 571.3 2911.7 571.3C2915.5 571.3 2919.3 566.2 2923.0 566.2C2925.0 566.2 2926.9 567.2 2928.9 567.9C2931.5 568.8 2934.1 571.3 2936.7 571.3C2939.3 571.3 2941.8 569.1 2944.3 568.9C2947.1 568.7 2950.0 568.6 2952.9 568.6C2956.1 568.6 2959.3 571.3 2962.5 571.3C2965.5 571.3 2968.6 569.0 2971.7 568.6C2974.0 568.2 2976.3 567.9 2978.6 567.9C2981.4 567.9 2984.3 569.8 2987.1 570.3C2989.8 570.8 2992.4 571.3 2995.0 571.3C2997.0 571.3 2998.9 568.9 3000.9 568.9C3003.1 568.9 3005.4 571.2 3007.7 571.3C3011.7 571.5 3015.7 571.7 3019.7 571.7C3022.6 571.7 3025.4 569.0 3028.3 568.6C3030.6 568.2 3032.9 567.9 3035.1 567.9C3038.0 567.9 3040.9 569.6 3043.7 569.6C3046.6 569.6 3049.4 568.9 3052.3 568.9C3054.9 568.9 3057.5 569.8 3060.2 570.3C3062.7 570.8 3065.2 572.0 3067.7 572.0C3071.7 572.0 3075.7 569.6 3079.7 569.6C3084.9 569.6 3090.0 569.6 3095.1 569.6C3098.8 569.6 3102.5 567.5 3106.1 567.5C3108.4 567.5 3110.7 569.0 3113.0 569.6C3115.6 570.3 3118.2 571.3 3120.9 571.3C3124.3 571.3 3127.7 570.0 3131.1 569.3C3133.8 568.7 3136.4 567.5 3139.0 567.5C3140.9 567.5 3142.7 570.3 3144.5 570.3C3145.0 570.3 3145.4 569.5 3145.9 568.7C3147.3 566.1 3148.6 536.7 3150.0 520.0C3151.4 503.3 3152.7 480.4 3154.1 468.6C3155.6 455.8 3157.1 441.1 3158.6 439.4C3160.1 437.8 3161.5 436.7 3163.0 436.7C3164.2 436.7 3165.3 440.2 3166.5 444.6C3167.8 449.8 3169.2 479.4 3170.6 496.0C3171.9 512.6 3173.3 531.9 3174.7 544.0C3175.9 555.0 3177.2 569.9 3178.5 570.7C3179.3 571.3 3180.1 571.5 3180.9 571.7C3182.0 571.8 3183.1 572.0 3184.3 572.0C3186.6 572.0 3188.9 568.6 3191.1 568.6C3193.4 568.6 3195.7 570.3 3198.0 570.3C3200.1 570.3 3202.1 567.9 3204.2 567.9C3206.1 567.9 3208.1 571.0 3210.0 571.0C3211.7 571.0 3213.4 569.6 3215.1 569.6C3216.9 569.6 3218.6 569.9 3220.3 570.3C3221.8 570.6 3223.3 571.9 3224.7 572.7" fill="none" stroke="#3274d9" stroke-width="2.2" stroke-linejoin="round"/></g>
<path d="M1217.9 387.5 L1271.2 387.5 L1271.2 395.2 L1240.8 463.8 L1226.6 463.8 L1256.5 398.6 L1217.9 398.6Z" fill="#3274d9"/>
<circle cx="1198.7" cy="457.2" r="7.6" fill="#3274d9"/>
<path d="M2791.4 387.5 L2805.1 387.5 L2805.1 436.2 L2814.6 436.2 L2814.6 447.0 L2805.1 447.0 L2805.1 463.8 L2792.2 463.8 L2792.2 447.0 L2759.2 447.0 L2759.2 438.3Z M2792.2 406.7 L2792.2 436.2 L2773.1 436.2Z" fill="#3274d9" fill-rule="evenodd"/>
<circle cx="2831.4" cy="457.2" r="7.6" fill="#3274d9"/>
<path d="M2850.3 387.5 L2903.3 387.5 L2903.3 395.7 L2873.1 463.8 L2859.2 463.8 L2889.1 398.3 L2850.3 398.3Z" fill="#3274d9"/>
<path d="M1848.45 552.57 A188.90 188.90 0 1 1 2207.75 552.57" fill="none" stroke="#3274d9" stroke-width="8.4"/>
<path d="M1878.50 542.81 A157.30 157.30 0 1 1 2177.70 542.81" fill="none" stroke="#eceef2" stroke-width="49.8"/>
<path d="M1878.50 542.81 A157.30 157.30 0 0 1 1874.07 526.10" fill="none" stroke="#3274d9" stroke-width="49.8"/>
<rect x="134.0" y="766.0" width="1434.0" height="2" fill="#ebebec"/>
<rect x="134.0" y="862.0" width="1434.0" height="2" fill="#ebebec"/>
<rect x="134.0" y="958.0" width="1434.0" height="2" fill="#ebebec"/>
<rect x="134.0" y="1055.8" width="1434.0" height="2" fill="#ebebec"/>
<rect x="194.0" y="766.0" width="2" height="291.8" fill="#ebebec"/>
<rect x="433.2" y="766.0" width="2" height="291.8" fill="#ebebec"/>
<rect x="672.4" y="766.0" width="2" height="291.8" fill="#ebebec"/>
<rect x="911.6" y="766.0" width="2" height="291.8" fill="#ebebec"/>
<rect x="1150.8" y="766.0" width="2" height="291.8" fill="#ebebec"/>
<rect x="1390.0" y="766.0" width="2" height="291.8" fill="#ebebec"/>
<clipPath id="gc_c1"><rect x="134.0" y="765.0" width="1434.0" height="292.8"/></clipPath>
<g clip-path="url(#gc_c1)"><polygon points="134.0,1047.0 146.0,1047.0 157.9,1047.0 169.9,1047.0 181.9,1047.0 193.8,1047.0 205.8,1047.0 217.8,1047.0 229.7,1047.0 241.7,1047.0 253.7,1047.0 265.6,1047.0 277.6,1047.0 289.6,1047.0 301.5,1047.0 313.5,1047.0 325.5,1047.0 337.4,1047.0 349.4,1047.0 361.4,1047.0 373.3,1047.0 385.3,1047.0 397.3,1047.0 409.2,1047.0 421.2,1047.0 433.2,1047.0 445.1,1047.0 457.1,1047.0 469.1,1047.0 481.0,1047.0 493.0,1047.0 505.0,1047.0 516.9,1047.0 528.9,1047.0 540.9,1047.0 552.8,1047.0 564.8,1047.0 576.8,1047.0 588.7,1047.0 600.7,1047.0 612.7,1047.0 624.6,1047.0 636.6,1046.2 648.6,1045.4 660.5,1045.3 672.5,1045.3 684.5,1045.3 696.4,1045.3 708.4,1045.3 720.4,1045.3 732.3,1045.3 744.3,1045.3 756.3,1045.3 768.2,1045.3 780.2,1045.3 792.2,1045.3 804.1,1045.3 816.1,1045.3 828.1,1045.3 840.0,1045.3 852.0,1045.3 863.9,1045.3 875.9,1046.9 887.9,1047.0 899.8,1047.0 911.8,1047.0 923.8,1047.0 935.7,1047.0 947.7,1047.0 959.7,1047.0 971.6,1047.0 983.6,1047.0 995.6,1047.0 1007.5,1047.0 1019.5,1047.0 1031.5,1047.0 1043.4,1047.0 1055.4,1047.0 1067.4,1047.0 1079.3,1047.0 1091.3,1047.0 1103.3,1047.0 1115.2,1047.0 1127.2,1047.0 1139.2,1047.0 1151.1,1047.0 1163.1,1047.0 1175.1,1047.0 1187.0,1047.0 1199.0,1047.0 1211.0,1047.0 1222.9,1047.0 1234.9,1047.0 1246.9,1047.0 1258.8,1047.0 1270.8,1047.0 1282.8,1047.0 1294.7,1047.0 1306.7,1047.0 1318.7,1047.0 1330.6,1047.0 1342.6,1047.0 1354.6,1047.0 1366.5,1047.0 1378.5,1047.0 1390.5,1047.0 1402.4,1047.0 1414.4,1046.6 1426.4,1046.2 1438.3,1045.8 1450.3,1045.4 1462.3,1045.3 1474.2,1045.3 1486.2,1045.3 1498.2,1045.3 1510.1,1045.3 1522.1,1045.3 1534.1,1045.3 1546.0,1045.3 1558.0,1045.3 1558.0,1056.8 134.0,1056.8" fill="#7eb26d" fill-opacity="0.1"/><polygon points="134.0,941.9 147.1,905.9 159.4,905.9 171.1,951.1 183.1,951.1 195.1,930.6 207.1,930.6 219.1,946.5 231.1,947.9 243.1,947.9 255.1,949.6 267.1,949.6 279.1,947.5 291.1,940.5 303.1,941.5 315.1,943.6 327.1,950.7 339.1,950.7 351.1,951.1 363.1,949.6 375.1,984.9 387.1,984.9 398.4,992.4 410.4,979.3 422.4,985.3 435.1,998.0 447.1,998.0 459.1,994.8 470.4,992.4 482.4,994.8 494.4,978.9 506.4,972.6 518.4,995.5 530.4,997.3 542.4,997.3 554.4,985.6 566.4,980.4 577.6,972.2 589.6,975.8 601.6,975.8 613.6,972.6 625.6,972.6 637.6,937.6 649.6,857.2 661.6,855.8 672.9,855.8 684.9,857.2 696.9,857.2 708.9,855.8 720.9,854.4 732.9,860.0 744.9,861.4 756.9,861.4 768.9,861.8 780.9,860.0 792.9,860.0 804.2,860.0 816.2,860.4 828.2,860.0 840.2,856.1 852.2,855.8 864.2,856.5 876.2,967.3 888.2,971.9 900.2,971.9 912.2,972.6 924.2,985.6 936.2,992.0 948.2,994.8 960.2,993.1 972.2,992.7 984.2,992.7 996.2,992.0 1008.2,992.7 1020.2,992.7 1032.2,992.7 1044.2,996.6 1056.2,994.8 1068.2,998.0 1080.2,999.8 1092.2,1006.5 1104.2,1005.8 1116.2,1005.1 1128.2,1008.2 1140.2,1006.1 1152.2,1005.4 1164.2,1004.7 1176.2,1008.2 1188.2,1008.9 1200.2,1008.2 1212.2,1003.6 1224.2,1002.9 1236.2,1004.4 1248.2,1005.4 1260.2,1005.4 1272.2,1005.4 1284.2,1005.4 1296.2,1007.2 1308.2,1006.8 1320.2,1005.8 1332.2,1004.4 1344.2,1004.4 1356.2,1002.9 1368.2,1001.9 1380.2,996.6 1392.2,996.6 1404.2,995.2 1416.2,986.7 1428.2,986.7 1440.2,994.1 1452.2,994.1 1464.2,993.8 1476.2,993.8 1488.2,994.1 1500.2,994.1 1512.2,976.8 1524.2,971.9 1536.2,972.2 1548.2,971.9 1557.8,971.9 1557.8,1056.8 134.0,1056.8" fill="#eab839" fill-opacity="0.1"/><polyline points="134.0,1047.0 146.0,1047.0 157.9,1047.0 169.9,1047.0 181.9,1047.0 193.8,1047.0 205.8,1047.0 217.8,1047.0 229.7,1047.0 241.7,1047.0 253.7,1047.0 265.6,1047.0 277.6,1047.0 289.6,1047.0 301.5,1047.0 313.5,1047.0 325.5,1047.0 337.4,1047.0 349.4,1047.0 361.4,1047.0 373.3,1047.0 385.3,1047.0 397.3,1047.0 409.2,1047.0 421.2,1047.0 433.2,1047.0 445.1,1047.0 457.1,1047.0 469.1,1047.0 481.0,1047.0 493.0,1047.0 505.0,1047.0 516.9,1047.0 528.9,1047.0 540.9,1047.0 552.8,1047.0 564.8,1047.0 576.8,1047.0 588.7,1047.0 600.7,1047.0 612.7,1047.0 624.6,1047.0 636.6,1046.2 648.6,1045.4 660.5,1045.3 672.5,1045.3 684.5,1045.3 696.4,1045.3 708.4,1045.3 720.4,1045.3 732.3,1045.3 744.3,1045.3 756.3,1045.3 768.2,1045.3 780.2,1045.3 792.2,1045.3 804.1,1045.3 816.1,1045.3 828.1,1045.3 840.0,1045.3 852.0,1045.3 863.9,1045.3 875.9,1046.9 887.9,1047.0 899.8,1047.0 911.8,1047.0 923.8,1047.0 935.7,1047.0 947.7,1047.0 959.7,1047.0 971.6,1047.0 983.6,1047.0 995.6,1047.0 1007.5,1047.0 1019.5,1047.0 1031.5,1047.0 1043.4,1047.0 1055.4,1047.0 1067.4,1047.0 1079.3,1047.0 1091.3,1047.0 1103.3,1047.0 1115.2,1047.0 1127.2,1047.0 1139.2,1047.0 1151.1,1047.0 1163.1,1047.0 1175.1,1047.0 1187.0,1047.0 1199.0,1047.0 1211.0,1047.0 1222.9,1047.0 1234.9,1047.0 1246.9,1047.0 1258.8,1047.0 1270.8,1047.0 1282.8,1047.0 1294.7,1047.0 1306.7,1047.0 1318.7,1047.0 1330.6,1047.0 1342.6,1047.0 1354.6,1047.0 1366.5,1047.0 1378.5,1047.0 1390.5,1047.0 1402.4,1047.0 1414.4,1046.6 1426.4,1046.2 1438.3,1045.8 1450.3,1045.4 1462.3,1045.3 1474.2,1045.3 1486.2,1045.3 1498.2,1045.3 1510.1,1045.3 1522.1,1045.3 1534.1,1045.3 1546.0,1045.3 1558.0,1045.3" fill="none" stroke="#7eb26d" stroke-width="2.1" stroke-linejoin="round"/><polyline points="134.0,941.9 147.1,905.9 159.4,905.9 171.1,951.1 183.1,951.1 195.1,930.6 207.1,930.6 219.1,946.5 231.1,947.9 243.1,947.9 255.1,949.6 267.1,949.6 279.1,947.5 291.1,940.5 303.1,941.5 315.1,943.6 327.1,950.7 339.1,950.7 351.1,951.1 363.1,949.6 375.1,984.9 387.1,984.9 398.4,992.4 410.4,979.3 422.4,985.3 435.1,998.0 447.1,998.0 459.1,994.8 470.4,992.4 482.4,994.8 494.4,978.9 506.4,972.6 518.4,995.5 530.4,997.3 542.4,997.3 554.4,985.6 566.4,980.4 577.6,972.2 589.6,975.8 601.6,975.8 613.6,972.6 625.6,972.6 637.6,937.6 649.6,857.2 661.6,855.8 672.9,855.8 684.9,857.2 696.9,857.2 708.9,855.8 720.9,854.4 732.9,860.0 744.9,861.4 756.9,861.4 768.9,861.8 780.9,860.0 792.9,860.0 804.2,860.0 816.2,860.4 828.2,860.0 840.2,856.1 852.2,855.8 864.2,856.5 876.2,967.3 888.2,971.9 900.2,971.9 912.2,972.6 924.2,985.6 936.2,992.0 948.2,994.8 960.2,993.1 972.2,992.7 984.2,992.7 996.2,992.0 1008.2,992.7 1020.2,992.7 1032.2,992.7 1044.2,996.6 1056.2,994.8 1068.2,998.0 1080.2,999.8 1092.2,1006.5 1104.2,1005.8 1116.2,1005.1 1128.2,1008.2 1140.2,1006.1 1152.2,1005.4 1164.2,1004.7 1176.2,1008.2 1188.2,1008.9 1200.2,1008.2 1212.2,1003.6 1224.2,1002.9 1236.2,1004.4 1248.2,1005.4 1260.2,1005.4 1272.2,1005.4 1284.2,1005.4 1296.2,1007.2 1308.2,1006.8 1320.2,1005.8 1332.2,1004.4 1344.2,1004.4 1356.2,1002.9 1368.2,1001.9 1380.2,996.6 1392.2,996.6 1404.2,995.2 1416.2,986.7 1428.2,986.7 1440.2,994.1 1452.2,994.1 1464.2,993.8 1476.2,993.8 1488.2,994.1 1500.2,994.1 1512.2,976.8 1524.2,971.9 1536.2,972.2 1548.2,971.9 1557.8,971.9" fill="none" stroke="#eab839" stroke-width="2.1" stroke-linejoin="round"/></g>
<rect x="79.1" y="1170.6" width="21.8" height="2.8" rx="1.4" fill="#7eb26d"/>
<rect x="79.1" y="1220.6" width="21.8" height="2.8" rx="1.4" fill="#eab839"/>
<rect x="1692.0" y="766.0" width="1483.5" height="2" fill="#ebebec"/>
<rect x="1692.0" y="862.0" width="1483.5" height="2" fill="#ebebec"/>
<rect x="1692.0" y="958.0" width="1483.5" height="2" fill="#ebebec"/>
<rect x="1692.0" y="1055.8" width="1483.5" height="2" fill="#ebebec"/>
<rect x="1754.0" y="766.0" width="2" height="291.8" fill="#ebebec"/>
<rect x="2001.2" y="766.0" width="2" height="291.8" fill="#ebebec"/>
<rect x="2248.4" y="766.0" width="2" height="291.8" fill="#ebebec"/>
<rect x="2495.6" y="766.0" width="2" height="291.8" fill="#ebebec"/>
<rect x="2742.8" y="766.0" width="2" height="291.8" fill="#ebebec"/>
<rect x="2990.0" y="766.0" width="2" height="291.8" fill="#ebebec"/>
<clipPath id="gc_c2"><rect x="1692.0" y="765.0" width="1483.5" height="292.8"/></clipPath>
<g clip-path="url(#gc_c2)"><polygon points="1692.1,972.9 1704.5,969.8 1716.8,971.2 1729.2,970.5 1741.5,971.9 1753.9,969.4 1766.2,968.4 1778.6,968.0 1790.9,971.2 1803.3,969.8 1815.6,969.1 1828.0,969.4 1840.4,971.9 1852.7,971.9 1865.1,969.1 1877.4,968.4 1889.8,970.1 1902.1,972.9 1914.5,970.5 1926.8,969.1 1939.2,970.8 1951.5,971.9 1963.9,970.1 1976.2,967.6 1988.6,969.4 2000.9,969.1 2013.3,971.9 2025.6,968.4 2038.0,970.5 2050.4,971.2 2062.7,972.6 2075.1,968.7 2087.4,968.0 2099.8,968.0 2112.1,971.5 2124.5,971.5 2136.8,972.6 2149.2,970.1 2161.5,967.6 2173.9,968.4 2186.2,968.4 2200.0,968.0 2212.4,891.8 2225.1,869.5 2237.1,867.8 2249.4,866.4 2261.8,970.1 2274.1,972.2 2286.5,970.5 2298.8,969.4 2311.2,970.8 2323.5,972.6 2335.9,974.0 2348.2,968.7 2360.6,969.4 2372.9,969.8 2385.3,972.9 2397.6,968.7 2410.2,969.8 2422.6,969.8 2435.3,974.7 2447.6,969.1 2460.0,970.1 2472.4,969.4 2484.7,973.3 2497.1,967.6 2509.4,968.4 2521.8,968.0 2534.1,970.5 2546.5,967.6 2558.8,968.0 2571.2,970.8 2583.5,971.9 2595.9,969.4 2608.2,966.9 2620.6,968.7 2632.9,970.8 2645.3,969.1 2657.6,968.7 2670.0,969.4 2682.4,971.2 2694.7,969.4 2707.1,968.7 2719.4,969.4 2731.8,970.8 2744.1,971.9 2756.5,969.8 2768.8,971.2 2781.2,971.2 2793.5,971.9 2805.9,969.1 2818.2,968.7 2830.6,970.1 2842.9,969.4 2855.3,969.8 2867.6,970.5 2880.0,971.9 2892.4,971.2 2904.7,970.1 2917.1,970.1 2929.4,970.1 2941.8,969.8 2954.1,968.4 2966.5,970.1 2978.8,971.9 2991.2,970.8 3003.5,969.1 3015.9,968.0 3028.9,970.1 3041.3,918.2 3054.0,866.0 3066.0,864.2 3078.4,917.5 3090.7,971.2 3103.1,971.9 3115.4,969.1 3127.8,970.5 3140.1,968.7 3152.5,970.8 3164.8,970.1 3164.8,1056.8 1692.1,1056.8" fill="#7eb26d" fill-opacity="0.1"/><polygon points="1692.1,1055.9 2198.6,1055.9 2212.4,1054.5 2225.1,1053.4 2237.1,1053.1 2249.4,1053.4 2261.8,1055.9 2470.0,1055.9 2406.0,1055.9 3028.9,1055.9 3041.3,1054.1 3054.0,1053.1 3066.0,1053.1 3078.4,1054.1 3090.7,1055.9 3164.8,1055.9 3164.8,1056.8 1692.1,1056.8" fill="#eab839" fill-opacity="0.1"/><polyline points="1692.1,972.9 1704.5,969.8 1716.8,971.2 1729.2,970.5 1741.5,971.9 1753.9,969.4 1766.2,968.4 1778.6,968.0 1790.9,971.2 1803.3,969.8 1815.6,969.1 1828.0,969.4 1840.4,971.9 1852.7,971.9 1865.1,969.1 1877.4,968.4 1889.8,970.1 1902.1,972.9 1914.5,970.5 1926.8,969.1 1939.2,970.8 1951.5,971.9 1963.9,970.1 1976.2,967.6 1988.6,969.4 2000.9,969.1 2013.3,971.9 2025.6,968.4 2038.0,970.5 2050.4,971.2 2062.7,972.6 2075.1,968.7 2087.4,968.0 2099.8,968.0 2112.1,971.5 2124.5,971.5 2136.8,972.6 2149.2,970.1 2161.5,967.6 2173.9,968.4 2186.2,968.4 2200.0,968.0 2212.4,891.8 2225.1,869.5 2237.1,867.8 2249.4,866.4 2261.8,970.1 2274.1,972.2 2286.5,970.5 2298.8,969.4 2311.2,970.8 2323.5,972.6 2335.9,974.0 2348.2,968.7 2360.6,969.4 2372.9,969.8 2385.3,972.9 2397.6,968.7 2410.2,969.8 2422.6,969.8 2435.3,974.7 2447.6,969.1 2460.0,970.1 2472.4,969.4 2484.7,973.3 2497.1,967.6 2509.4,968.4 2521.8,968.0 2534.1,970.5 2546.5,967.6 2558.8,968.0 2571.2,970.8 2583.5,971.9 2595.9,969.4 2608.2,966.9 2620.6,968.7 2632.9,970.8 2645.3,969.1 2657.6,968.7 2670.0,969.4 2682.4,971.2 2694.7,969.4 2707.1,968.7 2719.4,969.4 2731.8,970.8 2744.1,971.9 2756.5,969.8 2768.8,971.2 2781.2,971.2 2793.5,971.9 2805.9,969.1 2818.2,968.7 2830.6,970.1 2842.9,969.4 2855.3,969.8 2867.6,970.5 2880.0,971.9 2892.4,971.2 2904.7,970.1 2917.1,970.1 2929.4,970.1 2941.8,969.8 2954.1,968.4 2966.5,970.1 2978.8,971.9 2991.2,970.8 3003.5,969.1 3015.9,968.0 3028.9,970.1 3041.3,918.2 3054.0,866.0 3066.0,864.2 3078.4,917.5 3090.7,971.2 3103.1,971.9 3115.4,969.1 3127.8,970.5 3140.1,968.7 3152.5,970.8 3164.8,970.1" fill="none" stroke="#7eb26d" stroke-width="2.1" stroke-linejoin="round"/><polyline points="1692.1,1055.9 2198.6,1055.9 2212.4,1054.5 2225.1,1053.4 2237.1,1053.1 2249.4,1053.4 2261.8,1055.9 2470.0,1055.9 2406.0,1055.9 3028.9,1055.9 3041.3,1054.1 3054.0,1053.1 3066.0,1053.1 3078.4,1054.1 3090.7,1055.9 3164.8,1055.9" fill="none" stroke="#eab839" stroke-width="2.1" stroke-linejoin="round"/></g>
<rect x="1687.1" y="1170.6" width="21.8" height="2.8" rx="1.4" fill="#7eb26d"/>
<rect x="1687.1" y="1220.6" width="21.8" height="2.8" rx="1.4" fill="#eab839"/>
<rect x="134.0" y="1373.6" width="1434.0" height="2" fill="#ebebec"/>
<rect x="134.0" y="1456.2" width="1434.0" height="2" fill="#ebebec"/>
<rect x="134.0" y="1540.0" width="1434.0" height="2" fill="#ebebec"/>
<rect x="134.0" y="1624.0" width="1434.0" height="2" fill="#ebebec"/>
<rect x="134.0" y="1707.8" width="1434.0" height="2" fill="#ebebec"/>
<rect x="134.0" y="1791.8" width="1434.0" height="2" fill="#ebebec"/>
<rect x="194.0" y="1373.6" width="2" height="420.2" fill="#ebebec"/>
<rect x="433.2" y="1373.6" width="2" height="420.2" fill="#ebebec"/>
<rect x="672.4" y="1373.6" width="2" height="420.2" fill="#ebebec"/>
<rect x="911.6" y="1373.6" width="2" height="420.2" fill="#ebebec"/>
<rect x="1150.8" y="1373.6" width="2" height="420.2" fill="#ebebec"/>
<rect x="1390.0" y="1373.6" width="2" height="420.2" fill="#ebebec"/>
<clipPath id="gc_c3"><rect x="134.0" y="1372.6" width="1434.0" height="421.2"/></clipPath>
<g clip-path="url(#gc_c3)"><polygon points="134.0,1788.7 146.0,1788.8 157.9,1788.9 169.9,1789.0 181.9,1788.8 193.8,1788.7 205.8,1788.6 217.8,1788.6 229.7,1788.7 241.7,1788.6 253.7,1788.7 265.6,1788.6 277.6,1788.6 289.6,1788.6 301.5,1788.8 313.5,1788.8 325.5,1788.6 337.4,1788.6 349.4,1788.5 361.4,1788.7 373.3,1788.9 385.3,1788.9 397.3,1789.0 409.2,1789.1 421.2,1789.1 433.2,1789.2 445.1,1789.0 457.1,1789.1 469.1,1789.0 481.0,1789.0 493.0,1789.0 505.0,1788.9 516.9,1788.8 528.9,1788.8 540.9,1788.7 552.8,1788.6 564.8,1788.8 576.8,1788.9 588.7,1789.0 600.7,1789.0 612.7,1789.0 624.6,1788.9 636.6,1775.3 648.6,1764.2 660.5,1764.5 672.5,1764.5 684.5,1788.7 696.4,1788.7 708.4,1788.6 720.4,1788.7 732.3,1788.7 744.3,1788.7 756.3,1788.6 768.2,1788.7 780.2,1788.6 792.2,1788.6 804.1,1788.5 816.1,1788.5 828.1,1788.5 840.0,1788.6 852.0,1788.8 863.9,1788.8 875.9,1788.8 887.9,1789.0 899.8,1788.8 911.8,1788.7 923.8,1788.8 935.7,1788.9 947.7,1788.9 959.7,1788.8 971.6,1788.8 983.6,1788.9 995.6,1789.0 1007.5,1789.1 1019.5,1788.9 1031.5,1789.0 1043.4,1788.9 1055.4,1789.0 1067.4,1788.8 1079.3,1789.0 1091.3,1789.0 1103.3,1789.0 1115.2,1788.8 1127.2,1788.9 1139.2,1788.9 1151.1,1788.9 1163.1,1788.8 1175.1,1788.9 1187.0,1788.8 1199.0,1788.7 1211.0,1788.6 1222.9,1788.7 1234.9,1788.6 1246.9,1788.6 1258.8,1788.5 1270.8,1788.6 1282.8,1788.7 1294.7,1788.7 1306.7,1788.6 1318.7,1788.6 1330.6,1788.6 1342.6,1788.5 1354.6,1788.4 1366.5,1788.7 1378.5,1788.6 1390.5,1788.6 1402.4,1788.5 1414.4,1788.6 1426.4,1789.1 1438.3,1784.0 1450.3,1772.5 1462.3,1772.5 1474.2,1775.8 1486.2,1787.1 1498.2,1787.0 1510.1,1786.9 1522.1,1789.2 1534.1,1788.8 1546.0,1788.9 1558.0,1788.8 1558.0,1792.8 134.0,1792.8" fill="#7eb26d" fill-opacity="0.1"/><polygon points="134.0,1783.9 146.0,1784.0 157.9,1784.6 169.9,1784.4 181.9,1784.3 193.8,1784.3 205.8,1783.8 217.8,1783.9 229.7,1784.1 241.7,1784.5 253.7,1783.8 265.6,1783.6 277.6,1783.2 289.6,1783.8 301.5,1784.1 313.5,1783.5 325.5,1784.2 337.4,1784.8 349.4,1784.8 361.4,1784.7 373.3,1784.1 385.3,1783.4 397.3,1783.6 409.2,1783.1 421.2,1783.0 433.2,1782.9 445.1,1782.6 457.1,1782.9 469.1,1783.1 481.0,1783.7 493.0,1783.8 505.0,1784.1 516.9,1784.0 528.9,1784.2 540.9,1784.1 552.8,1783.8 564.8,1784.5 576.8,1785.0 588.7,1785.2 600.7,1785.2 612.7,1783.6 624.6,1784.4 636.6,1769.0 648.6,1758.9 660.5,1759.2 672.5,1759.4 684.5,1786.2 696.4,1785.8 708.4,1783.9 720.4,1784.9 732.3,1784.0 744.3,1783.7 756.3,1784.3 768.2,1784.2 780.2,1784.7 792.2,1784.4 804.1,1783.8 816.1,1784.0 828.1,1784.4 840.0,1784.0 852.0,1783.4 863.9,1783.4 875.9,1784.1 887.9,1784.4 899.8,1783.8 911.8,1783.5 923.8,1783.1 935.7,1782.8 947.7,1783.5 959.7,1783.2 971.6,1783.5 983.6,1783.5 995.6,1783.2 1007.5,1783.7 1019.5,1783.3 1031.5,1783.7 1043.4,1783.3 1055.4,1783.3 1067.4,1783.1 1079.3,1783.1 1091.3,1783.9 1103.3,1784.3 1115.2,1784.0 1127.2,1784.5 1139.2,1784.0 1151.1,1783.9 1163.1,1784.4 1175.1,1784.4 1187.0,1783.8 1199.0,1784.5 1211.0,1784.0 1222.9,1783.7 1234.9,1784.1 1246.9,1783.9 1258.8,1783.6 1270.8,1783.2 1282.8,1782.8 1294.7,1783.2 1306.7,1783.1 1318.7,1783.5 1330.6,1783.4 1342.6,1783.5 1354.6,1784.2 1366.5,1784.1 1378.5,1784.2 1390.5,1784.6 1402.4,1782.1 1414.4,1784.4 1426.4,1784.6 1438.3,1779.7 1450.3,1767.8 1462.3,1768.1 1474.2,1771.7 1486.2,1783.1 1498.2,1783.1 1510.1,1782.3 1522.1,1785.0 1534.1,1784.9 1546.0,1784.5 1558.0,1783.9 1558.0,1788.8 1546.0,1788.9 1534.1,1788.8 1522.1,1789.2 1510.1,1786.9 1498.2,1787.0 1486.2,1787.1 1474.2,1775.8 1462.3,1772.5 1450.3,1772.5 1438.3,1784.0 1426.4,1789.1 1414.4,1788.6 1402.4,1788.5 1390.5,1788.6 1378.5,1788.6 1366.5,1788.7 1354.6,1788.4 1342.6,1788.5 1330.6,1788.6 1318.7,1788.6 1306.7,1788.6 1294.7,1788.7 1282.8,1788.7 1270.8,1788.6 1258.8,1788.5 1246.9,1788.6 1234.9,1788.6 1222.9,1788.7 1211.0,1788.6 1199.0,1788.7 1187.0,1788.8 1175.1,1788.9 1163.1,1788.8 1151.1,1788.9 1139.2,1788.9 1127.2,1788.9 1115.2,1788.8 1103.3,1789.0 1091.3,1789.0 1079.3,1789.0 1067.4,1788.8 1055.4,1789.0 1043.4,1788.9 1031.5,1789.0 1019.5,1788.9 1007.5,1789.1 995.6,1789.0 983.6,1788.9 971.6,1788.8 959.7,1788.8 947.7,1788.9 935.7,1788.9 923.8,1788.8 911.8,1788.7 899.8,1788.8 887.9,1789.0 875.9,1788.8 863.9,1788.8 852.0,1788.8 840.0,1788.6 828.1,1788.5 816.1,1788.5 804.1,1788.5 792.2,1788.6 780.2,1788.6 768.2,1788.7 756.3,1788.6 744.3,1788.7 732.3,1788.7 720.4,1788.7 708.4,1788.6 696.4,1788.7 684.5,1788.7 672.5,1764.5 660.5,1764.5 648.6,1764.2 636.6,1775.3 624.6,1788.9 612.7,1789.0 600.7,1789.0 588.7,1789.0 576.8,1788.9 564.8,1788.8 552.8,1788.6 540.9,1788.7 528.9,1788.8 516.9,1788.8 505.0,1788.9 493.0,1789.0 481.0,1789.0 469.1,1789.0 457.1,1789.1 445.1,1789.0 433.2,1789.2 421.2,1789.1 409.2,1789.1 397.3,1789.0 385.3,1788.9 373.3,1788.9 361.4,1788.7 349.4,1788.5 337.4,1788.6 325.5,1788.6 313.5,1788.8 301.5,1788.8 289.6,1788.6 277.6,1788.6 265.6,1788.6 253.7,1788.7 241.7,1788.6 229.7,1788.7 217.8,1788.6 205.8,1788.6 193.8,1788.7 181.9,1788.8 169.9,1789.0 157.9,1788.9 146.0,1788.8 134.0,1788.7" fill="#eab839" fill-opacity="0.1"/><polygon points="134.0,1781.5 146.0,1781.6 157.9,1782.2 169.9,1782.0 181.9,1781.9 193.8,1781.9 205.8,1781.4 217.8,1781.5 229.7,1781.7 241.7,1782.1 253.7,1781.4 265.6,1781.2 277.6,1780.8 289.6,1781.4 301.5,1781.7 313.5,1781.1 325.5,1781.8 337.4,1782.4 349.4,1782.4 361.4,1782.3 373.3,1781.7 385.3,1781.0 397.3,1781.2 409.2,1780.7 421.2,1780.6 433.2,1780.5 445.1,1780.2 457.1,1780.5 469.1,1780.7 481.0,1781.3 493.0,1781.4 505.0,1781.7 516.9,1781.6 528.9,1781.8 540.9,1781.7 552.8,1781.4 564.8,1782.1 576.8,1782.6 588.7,1782.8 600.7,1782.8 612.7,1781.2 624.6,1782.0 636.6,1766.5 648.6,1756.5 660.5,1756.8 672.5,1757.0 684.5,1783.8 696.4,1783.4 708.4,1781.5 720.4,1782.5 732.3,1781.6 744.3,1781.3 756.3,1781.9 768.2,1781.8 780.2,1782.3 792.2,1782.0 804.1,1781.4 816.1,1781.6 828.1,1782.0 840.0,1781.6 852.0,1781.0 863.9,1781.0 875.9,1781.7 887.9,1782.0 899.8,1781.4 911.8,1781.1 923.8,1780.7 935.7,1780.4 947.7,1781.1 959.7,1780.8 971.6,1781.1 983.6,1781.1 995.6,1780.8 1007.5,1781.3 1019.5,1780.9 1031.5,1781.3 1043.4,1780.9 1055.4,1780.9 1067.4,1780.7 1079.3,1780.7 1091.3,1781.5 1103.3,1781.9 1115.2,1781.6 1127.2,1782.1 1139.2,1781.6 1151.1,1781.5 1163.1,1782.0 1175.1,1782.0 1187.0,1781.4 1199.0,1782.1 1211.0,1781.6 1222.9,1781.3 1234.9,1781.7 1246.9,1781.5 1258.8,1781.2 1270.8,1780.8 1282.8,1780.4 1294.7,1780.8 1306.7,1780.7 1318.7,1781.1 1330.6,1781.0 1342.6,1781.1 1354.6,1781.8 1366.5,1781.7 1378.5,1781.8 1390.5,1782.2 1402.4,1779.7 1414.4,1782.0 1426.4,1782.2 1438.3,1777.3 1450.3,1765.5 1462.3,1765.8 1474.2,1769.6 1486.2,1780.7 1498.2,1780.7 1510.1,1779.9 1522.1,1782.6 1534.1,1782.5 1546.0,1782.1 1558.0,1781.5 1558.0,1783.9 1546.0,1784.5 1534.1,1784.9 1522.1,1785.0 1510.1,1782.3 1498.2,1783.1 1486.2,1783.1 1474.2,1771.7 1462.3,1768.1 1450.3,1767.8 1438.3,1779.7 1426.4,1784.6 1414.4,1784.4 1402.4,1782.1 1390.5,1784.6 1378.5,1784.2 1366.5,1784.1 1354.6,1784.2 1342.6,1783.5 1330.6,1783.4 1318.7,1783.5 1306.7,1783.1 1294.7,1783.2 1282.8,1782.8 1270.8,1783.2 1258.8,1783.6 1246.9,1783.9 1234.9,1784.1 1222.9,1783.7 1211.0,1784.0 1199.0,1784.5 1187.0,1783.8 1175.1,1784.4 1163.1,1784.4 1151.1,1783.9 1139.2,1784.0 1127.2,1784.5 1115.2,1784.0 1103.3,1784.3 1091.3,1783.9 1079.3,1783.1 1067.4,1783.1 1055.4,1783.3 1043.4,1783.3 1031.5,1783.7 1019.5,1783.3 1007.5,1783.7 995.6,1783.2 983.6,1783.5 971.6,1783.5 959.7,1783.2 947.7,1783.5 935.7,1782.8 923.8,1783.1 911.8,1783.5 899.8,1783.8 887.9,1784.4 875.9,1784.1 863.9,1783.4 852.0,1783.4 840.0,1784.0 828.1,1784.4 816.1,1784.0 804.1,1783.8 792.2,1784.4 780.2,1784.7 768.2,1784.2 756.3,1784.3 744.3,1783.7 732.3,1784.0 720.4,1784.9 708.4,1783.9 696.4,1785.8 684.5,1786.2 672.5,1759.4 660.5,1759.2 648.6,1758.9 636.6,1769.0 624.6,1784.4 612.7,1783.6 600.7,1785.2 588.7,1785.2 576.8,1785.0 564.8,1784.5 552.8,1783.8 540.9,1784.1 528.9,1784.2 516.9,1784.0 505.0,1784.1 493.0,1783.8 481.0,1783.7 469.1,1783.1 457.1,1782.9 445.1,1782.6 433.2,1782.9 421.2,1783.0 409.2,1783.1 397.3,1783.6 385.3,1783.4 373.3,1784.1 361.4,1784.7 349.4,1784.8 337.4,1784.8 325.5,1784.2 313.5,1783.5 301.5,1784.1 289.6,1783.8 277.6,1783.2 265.6,1783.6 253.7,1783.8 241.7,1784.5 229.7,1784.1 217.8,1783.9 205.8,1783.8 193.8,1784.3 181.9,1784.3 169.9,1784.4 157.9,1784.6 146.0,1784.0 134.0,1783.9" fill="#65bbe1" fill-opacity="0.1"/><polygon points="134.0,1647.8 135.4,1660.5 147.4,1592.7 159.4,1585.6 171.4,1553.2 183.4,1533.8 195.4,1528.8 207.4,1473.4 219.4,1501.6 231.4,1576.5 243.1,1677.8 255.1,1576.5 267.1,1548.9 279.1,1551.4 291.1,1711.3 303.1,1609.3 315.1,1573.6 327.1,1570.8 338.7,1712.0 350.7,1661.2 362.7,1576.5 374.7,1568.0 386.7,1659.8 398.7,1653.1 410.0,1589.2 422.4,1590.6 434.4,1577.5 446.4,1636.5 458.0,1476.6 470.0,1556.0 482.0,1601.9 494.0,1673.2 506.0,1564.8 518.0,1545.8 530.0,1583.5 542.0,1662.9 554.0,1595.5 566.0,1571.9 577.6,1560.9 589.6,1623.1 601.6,1643.9 613.6,1563.8 625.6,1550.4 637.6,1580.4 649.3,1629.1 661.3,1549.6 673.3,1435.6 685.3,1503.1 696.9,1578.2 708.9,1530.2 720.9,1566.2 732.9,1596.6 744.9,1623.1 756.9,1624.1 768.9,1546.8 780.9,1578.2 792.9,1609.6 804.9,1646.0 816.6,1576.1 828.6,1566.9 840.6,1628.7 852.6,1648.1 864.6,1573.6 876.6,1557.1 888.6,1602.9 900.6,1640.0 912.2,1520.0 924.2,1481.9 936.2,1535.2 948.2,1548.9 960.2,1584.9 972.2,1565.9 984.2,1612.8 996.2,1611.8 1008.2,1589.5 1019.9,1559.5 1031.9,1622.4 1043.9,1600.1 1055.9,1589.5 1067.9,1580.0 1079.9,1631.2 1091.9,1624.1 1103.9,1586.4 1115.5,1576.8 1127.5,1594.5 1139.5,1601.9 1151.5,1619.5 1163.5,1497.1 1175.5,1499.5 1187.5,1500.9 1199.2,1594.1 1211.2,1573.6 1223.2,1589.5 1235.2,1605.8 1247.2,1601.9 1259.2,1584.2 1271.2,1574.7 1283.2,1621.3 1295.2,1639.3 1306.8,1592.7 1318.8,1572.9 1330.8,1643.2 1342.8,1646.0 1354.8,1594.8 1366.8,1565.2 1378.8,1605.1 1390.8,1626.9 1402.8,1585.3 1414.5,1444.5 1426.5,1470.6 1438.5,1486.1 1450.5,1566.9 1462.5,1545.1 1474.5,1574.0 1486.5,1598.4 1498.5,1605.1 1510.5,1584.9 1522.5,1584.2 1534.5,1594.1 1546.5,1607.9 1557.8,1575.8 1558.0,1781.5 1546.0,1782.1 1534.1,1782.5 1522.1,1782.6 1510.1,1779.9 1498.2,1780.7 1486.2,1780.7 1474.2,1769.6 1462.3,1765.8 1450.3,1765.5 1438.3,1777.3 1426.4,1782.2 1414.4,1782.0 1402.4,1779.7 1390.5,1782.2 1378.5,1781.8 1366.5,1781.7 1354.6,1781.8 1342.6,1781.1 1330.6,1781.0 1318.7,1781.1 1306.7,1780.7 1294.7,1780.8 1282.8,1780.4 1270.8,1780.8 1258.8,1781.2 1246.9,1781.5 1234.9,1781.7 1222.9,1781.3 1211.0,1781.6 1199.0,1782.1 1187.0,1781.4 1175.1,1782.0 1163.1,1782.0 1151.1,1781.5 1139.2,1781.6 1127.2,1782.1 1115.2,1781.6 1103.3,1781.9 1091.3,1781.5 1079.3,1780.7 1067.4,1780.7 1055.4,1780.9 1043.4,1780.9 1031.5,1781.3 1019.5,1780.9 1007.5,1781.3 995.6,1780.8 983.6,1781.1 971.6,1781.1 959.7,1780.8 947.7,1781.1 935.7,1780.4 923.8,1780.7 911.8,1781.1 899.8,1781.4 887.9,1782.0 875.9,1781.7 863.9,1781.0 852.0,1781.0 840.0,1781.6 828.1,1782.0 816.1,1781.6 804.1,1781.4 792.2,1782.0 780.2,1782.3 768.2,1781.8 756.3,1781.9 744.3,1781.3 732.3,1781.6 720.4,1782.5 708.4,1781.5 696.4,1783.4 684.5,1783.8 672.5,1757.0 660.5,1756.8 648.6,1756.5 636.6,1766.5 624.6,1782.0 612.7,1781.2 600.7,1782.8 588.7,1782.8 576.8,1782.6 564.8,1782.1 552.8,1781.4 540.9,1781.7 528.9,1781.8 516.9,1781.6 505.0,1781.7 493.0,1781.4 481.0,1781.3 469.1,1780.7 457.1,1780.5 445.1,1780.2 433.2,1780.5 421.2,1780.6 409.2,1780.7 397.3,1781.2 385.3,1781.0 373.3,1781.7 361.4,1782.3 349.4,1782.4 337.4,1782.4 325.5,1781.8 313.5,1781.1 301.5,1781.7 289.6,1781.4 277.6,1780.8 265.6,1781.2 253.7,1781.4 241.7,1782.1 229.7,1781.7 217.8,1781.5 205.8,1781.4 193.8,1781.9 181.9,1781.9 169.9,1782.0 157.9,1782.2 146.0,1781.6 134.0,1781.5" fill="#ef843c" fill-opacity="0.1"/><polyline points="134.0,1788.7 146.0,1788.8 157.9,1788.9 169.9,1789.0 181.9,1788.8 193.8,1788.7 205.8,1788.6 217.8,1788.6 229.7,1788.7 241.7,1788.6 253.7,1788.7 265.6,1788.6 277.6,1788.6 289.6,1788.6 301.5,1788.8 313.5,1788.8 325.5,1788.6 337.4,1788.6 349.4,1788.5 361.4,1788.7 373.3,1788.9 385.3,1788.9 397.3,1789.0 409.2,1789.1 421.2,1789.1 433.2,1789.2 445.1,1789.0 457.1,1789.1 469.1,1789.0 481.0,1789.0 493.0,1789.0 505.0,1788.9 516.9,1788.8 528.9,1788.8 540.9,1788.7 552.8,1788.6 564.8,1788.8 576.8,1788.9 588.7,1789.0 600.7,1789.0 612.7,1789.0 624.6,1788.9 636.6,1775.3 648.6,1764.2 660.5,1764.5 672.5,1764.5 684.5,1788.7 696.4,1788.7 708.4,1788.6 720.4,1788.7 732.3,1788.7 744.3,1788.7 756.3,1788.6 768.2,1788.7 780.2,1788.6 792.2,1788.6 804.1,1788.5 816.1,1788.5 828.1,1788.5 840.0,1788.6 852.0,1788.8 863.9,1788.8 875.9,1788.8 887.9,1789.0 899.8,1788.8 911.8,1788.7 923.8,1788.8 935.7,1788.9 947.7,1788.9 959.7,1788.8 971.6,1788.8 983.6,1788.9 995.6,1789.0 1007.5,1789.1 1019.5,1788.9 1031.5,1789.0 1043.4,1788.9 1055.4,1789.0 1067.4,1788.8 1079.3,1789.0 1091.3,1789.0 1103.3,1789.0 1115.2,1788.8 1127.2,1788.9 1139.2,1788.9 1151.1,1788.9 1163.1,1788.8 1175.1,1788.9 1187.0,1788.8 1199.0,1788.7 1211.0,1788.6 1222.9,1788.7 1234.9,1788.6 1246.9,1788.6 1258.8,1788.5 1270.8,1788.6 1282.8,1788.7 1294.7,1788.7 1306.7,1788.6 1318.7,1788.6 1330.6,1788.6 1342.6,1788.5 1354.6,1788.4 1366.5,1788.7 1378.5,1788.6 1390.5,1788.6 1402.4,1788.5 1414.4,1788.6 1426.4,1789.1 1438.3,1784.0 1450.3,1772.5 1462.3,1772.5 1474.2,1775.8 1486.2,1787.1 1498.2,1787.0 1510.1,1786.9 1522.1,1789.2 1534.1,1788.8 1546.0,1788.9 1558.0,1788.8" fill="none" stroke="#7eb26d" stroke-width="2.1" stroke-linejoin="round"/><polyline points="134.0,1783.9 146.0,1784.0 157.9,1784.6 169.9,1784.4 181.9,1784.3 193.8,1784.3 205.8,1783.8 217.8,1783.9 229.7,1784.1 241.7,1784.5 253.7,1783.8 265.6,1783.6 277.6,1783.2 289.6,1783.8 301.5,1784.1 313.5,1783.5 325.5,1784.2 337.4,1784.8 349.4,1784.8 361.4,1784.7 373.3,1784.1 385.3,1783.4 397.3,1783.6 409.2,1783.1 421.2,1783.0 433.2,1782.9 445.1,1782.6 457.1,1782.9 469.1,1783.1 481.0,1783.7 493.0,1783.8 505.0,1784.1 516.9,1784.0 528.9,1784.2 540.9,1784.1 552.8,1783.8 564.8,1784.5 576.8,1785.0 588.7,1785.2 600.7,1785.2 612.7,1783.6 624.6,1784.4 636.6,1769.0 648.6,1758.9 660.5,1759.2 672.5,1759.4 684.5,1786.2 696.4,1785.8 708.4,1783.9 720.4,1784.9 732.3,1784.0 744.3,1783.7 756.3,1784.3 768.2,1784.2 780.2,1784.7 792.2,1784.4 804.1,1783.8 816.1,1784.0 828.1,1784.4 840.0,1784.0 852.0,1783.4 863.9,1783.4 875.9,1784.1 887.9,1784.4 899.8,1783.8 911.8,1783.5 923.8,1783.1 935.7,1782.8 947.7,1783.5 959.7,1783.2 971.6,1783.5 983.6,1783.5 995.6,1783.2 1007.5,1783.7 1019.5,1783.3 1031.5,1783.7 1043.4,1783.3 1055.4,1783.3 1067.4,1783.1 1079.3,1783.1 1091.3,1783.9 1103.3,1784.3 1115.2,1784.0 1127.2,1784.5 1139.2,1784.0 1151.1,1783.9 1163.1,1784.4 1175.1,1784.4 1187.0,1783.8 1199.0,1784.5 1211.0,1784.0 1222.9,1783.7 1234.9,1784.1 1246.9,1783.9 1258.8,1783.6 1270.8,1783.2 1282.8,1782.8 1294.7,1783.2 1306.7,1783.1 1318.7,1783.5 1330.6,1783.4 1342.6,1783.5 1354.6,1784.2 1366.5,1784.1 1378.5,1784.2 1390.5,1784.6 1402.4,1782.1 1414.4,1784.4 1426.4,1784.6 1438.3,1779.7 1450.3,1767.8 1462.3,1768.1 1474.2,1771.7 1486.2,1783.1 1498.2,1783.1 1510.1,1782.3 1522.1,1785.0 1534.1,1784.9 1546.0,1784.5 1558.0,1783.9" fill="none" stroke="#eab839" stroke-width="2.1" stroke-linejoin="round"/><polyline points="134.0,1781.5 146.0,1781.6 157.9,1782.2 169.9,1782.0 181.9,1781.9 193.8,1781.9 205.8,1781.4 217.8,1781.5 229.7,1781.7 241.7,1782.1 253.7,1781.4 265.6,1781.2 277.6,1780.8 289.6,1781.4 301.5,1781.7 313.5,1781.1 325.5,1781.8 337.4,1782.4 349.4,1782.4 361.4,1782.3 373.3,1781.7 385.3,1781.0 397.3,1781.2 409.2,1780.7 421.2,1780.6 433.2,1780.5 445.1,1780.2 457.1,1780.5 469.1,1780.7 481.0,1781.3 493.0,1781.4 505.0,1781.7 516.9,1781.6 528.9,1781.8 540.9,1781.7 552.8,1781.4 564.8,1782.1 576.8,1782.6 588.7,1782.8 600.7,1782.8 612.7,1781.2 624.6,1782.0 636.6,1766.5 648.6,1756.5 660.5,1756.8 672.5,1757.0 684.5,1783.8 696.4,1783.4 708.4,1781.5 720.4,1782.5 732.3,1781.6 744.3,1781.3 756.3,1781.9 768.2,1781.8 780.2,1782.3 792.2,1782.0 804.1,1781.4 816.1,1781.6 828.1,1782.0 840.0,1781.6 852.0,1781.0 863.9,1781.0 875.9,1781.7 887.9,1782.0 899.8,1781.4 911.8,1781.1 923.8,1780.7 935.7,1780.4 947.7,1781.1 959.7,1780.8 971.6,1781.1 983.6,1781.1 995.6,1780.8 1007.5,1781.3 1019.5,1780.9 1031.5,1781.3 1043.4,1780.9 1055.4,1780.9 1067.4,1780.7 1079.3,1780.7 1091.3,1781.5 1103.3,1781.9 1115.2,1781.6 1127.2,1782.1 1139.2,1781.6 1151.1,1781.5 1163.1,1782.0 1175.1,1782.0 1187.0,1781.4 1199.0,1782.1 1211.0,1781.6 1222.9,1781.3 1234.9,1781.7 1246.9,1781.5 1258.8,1781.2 1270.8,1780.8 1282.8,1780.4 1294.7,1780.8 1306.7,1780.7 1318.7,1781.1 1330.6,1781.0 1342.6,1781.1 1354.6,1781.8 1366.5,1781.7 1378.5,1781.8 1390.5,1782.2 1402.4,1779.7 1414.4,1782.0 1426.4,1782.2 1438.3,1777.3 1450.3,1765.5 1462.3,1765.8 1474.2,1769.6 1486.2,1780.7 1498.2,1780.7 1510.1,1779.9 1522.1,1782.6 1534.1,1782.5 1546.0,1782.1 1558.0,1781.5" fill="none" stroke="#65bbe1" stroke-width="2.1" stroke-linejoin="round"/><polyline points="134.0,1647.8 135.4,1660.5 147.4,1592.7 159.4,1585.6 171.4,1553.2 183.4,1533.8 195.4,1528.8 207.4,1473.4 219.4,1501.6 231.4,1576.5 243.1,1677.8 255.1,1576.5 267.1,1548.9 279.1,1551.4 291.1,1711.3 303.1,1609.3 315.1,1573.6 327.1,1570.8 338.7,1712.0 350.7,1661.2 362.7,1576.5 374.7,1568.0 386.7,1659.8 398.7,1653.1 410.0,1589.2 422.4,1590.6 434.4,1577.5 446.4,1636.5 458.0,1476.6 470.0,1556.0 482.0,1601.9 494.0,1673.2 506.0,1564.8 518.0,1545.8 530.0,1583.5 542.0,1662.9 554.0,1595.5 566.0,1571.9 577.6,1560.9 589.6,1623.1 601.6,1643.9 613.6,1563.8 625.6,1550.4 637.6,1580.4 649.3,1629.1 661.3,1549.6 673.3,1435.6 685.3,1503.1 696.9,1578.2 708.9,1530.2 720.9,1566.2 732.9,1596.6 744.9,1623.1 756.9,1624.1 768.9,1546.8 780.9,1578.2 792.9,1609.6 804.9,1646.0 816.6,1576.1 828.6,1566.9 840.6,1628.7 852.6,1648.1 864.6,1573.6 876.6,1557.1 888.6,1602.9 900.6,1640.0 912.2,1520.0 924.2,1481.9 936.2,1535.2 948.2,1548.9 960.2,1584.9 972.2,1565.9 984.2,1612.8 996.2,1611.8 1008.2,1589.5 1019.9,1559.5 1031.9,1622.4 1043.9,1600.1 1055.9,1589.5 1067.9,1580.0 1079.9,1631.2 1091.9,1624.1 1103.9,1586.4 1115.5,1576.8 1127.5,1594.5 1139.5,1601.9 1151.5,1619.5 1163.5,1497.1 1175.5,1499.5 1187.5,1500.9 1199.2,1594.1 1211.2,1573.6 1223.2,1589.5 1235.2,1605.8 1247.2,1601.9 1259.2,1584.2 1271.2,1574.7 1283.2,1621.3 1295.2,1639.3 1306.8,1592.7 1318.8,1572.9 1330.8,1643.2 1342.8,1646.0 1354.8,1594.8 1366.8,1565.2 1378.8,1605.1 1390.8,1626.9 1402.8,1585.3 1414.5,1444.5 1426.5,1470.6 1438.5,1486.1 1450.5,1566.9 1462.5,1545.1 1474.5,1574.0 1486.5,1598.4 1498.5,1605.1 1510.5,1584.9 1522.5,1584.2 1534.5,1594.1 1546.5,1607.9 1557.8,1575.8" fill="none" stroke="#ef843c" stroke-width="2.1" stroke-linejoin="round"/></g>
<rect x="79.1" y="1906.6" width="21.8" height="2.8" rx="1.4" fill="#7eb26d"/>
<rect x="79.1" y="1956.6" width="21.8" height="2.8" rx="1.4" fill="#eab839"/>
<rect x="79.1" y="2006.6" width="21.8" height="2.8" rx="1.4" fill="#65bbe1"/>
<rect x="79.1" y="2056.6" width="21.8" height="2.8" rx="1.4" fill="#ef843c"/>
<rect x="1738.0" y="1373.6" width="1438.0" height="2" fill="#ebebec"/>
<rect x="1738.0" y="1443.3" width="1438.0" height="2" fill="#ebebec"/>
<rect x="1738.0" y="1513.0" width="1438.0" height="2" fill="#ebebec"/>
<rect x="1738.0" y="1582.7" width="1438.0" height="2" fill="#ebebec"/>
<rect x="1738.0" y="1652.5" width="1438.0" height="2" fill="#ebebec"/>
<rect x="1738.0" y="1722.2" width="1438.0" height="2" fill="#ebebec"/>
<rect x="1738.0" y="1791.9" width="1438.0" height="2" fill="#ebebec"/>
<rect x="1798.0" y="1373.6" width="2" height="420.3" fill="#ebebec"/>
<rect x="2037.7" y="1373.6" width="2" height="420.3" fill="#ebebec"/>
<rect x="2277.4" y="1373.6" width="2" height="420.3" fill="#ebebec"/>
<rect x="2517.1" y="1373.6" width="2" height="420.3" fill="#ebebec"/>
<rect x="2756.8" y="1373.6" width="2" height="420.3" fill="#ebebec"/>
<rect x="2996.5" y="1373.6" width="2" height="420.3" fill="#ebebec"/>
<clipPath id="gc_c4"><rect x="1738.0" y="1372.6" width="1438.0" height="421.3"/></clipPath>
<g clip-path="url(#gc_c4)"><polygon points="1738.0,1790.7 1750.0,1790.9 1762.0,1791.0 1774.0,1790.9 1786.0,1790.7 1798.0,1791.0 1810.0,1791.2 1822.0,1791.1 1834.0,1791.1 1846.0,1790.8 1858.0,1790.5 1870.0,1790.5 1882.0,1790.7 1894.0,1790.4 1906.0,1790.8 1918.0,1790.6 1930.0,1790.5 1942.0,1790.3 1954.0,1790.8 1966.0,1791.0 1978.0,1791.2 1990.0,1791.2 2002.0,1790.8 2014.0,1790.7 2026.0,1790.8 2038.0,1790.5 2050.0,1790.9 2062.0,1790.8 2074.0,1790.6 2086.0,1790.9 2098.0,1790.6 2110.0,1791.0 2122.0,1790.9 2134.0,1791.0 2146.0,1790.8 2158.0,1790.8 2170.0,1790.6 2182.0,1790.4 2194.0,1790.8 2206.0,1790.6 2218.0,1790.9 2230.0,1791.2 2242.0,1764.0 2254.0,1760.9 2266.0,1760.9 2278.0,1760.9 2290.0,1791.2 2302.0,1791.2 2314.0,1791.0 2326.0,1791.0 2338.0,1791.2 2350.0,1790.9 2362.0,1791.2 2374.0,1791.2 2386.0,1791.2 2398.0,1791.0 2410.0,1791.0 2422.0,1790.9 2434.0,1791.2 2446.0,1791.1 2458.0,1790.7 2470.0,1790.5 2482.0,1790.7 2494.0,1791.1 2506.0,1791.1 2518.0,1791.0 2530.0,1791.0 2542.0,1791.2 2554.0,1790.9 2566.0,1791.0 2578.0,1791.0 2590.0,1791.1 2602.0,1790.8 2614.0,1790.6 2626.0,1790.6 2638.0,1790.9 2650.0,1790.8 2662.0,1790.9 2674.0,1790.8 2686.0,1790.5 2698.0,1790.3 2710.0,1790.7 2722.0,1790.9 2734.0,1790.8 2746.0,1791.0 2758.0,1791.1 2770.0,1791.2 2782.0,1791.2 2794.0,1791.2 2806.0,1791.2 2818.0,1791.2 2830.0,1791.2 2842.0,1791.2 2854.0,1791.2 2866.0,1791.2 2878.0,1791.0 2890.0,1791.2 2902.0,1790.9 2914.0,1790.6 2926.0,1790.9 2938.0,1791.1 2950.0,1791.0 2962.0,1791.2 2974.0,1790.8 2986.0,1790.7 2998.0,1790.6 3010.0,1790.6 3022.0,1790.5 3034.0,1791.2 3046.0,1775.6 3058.0,1760.9 3070.0,1761.1 3082.0,1776.1 3094.0,1791.2 3106.0,1790.9 3118.0,1791.2 3130.0,1791.2 3142.0,1791.2 3154.0,1790.8 3166.0,1790.7 3166.0,1792.9 1738.0,1792.9" fill="#7eb26d" fill-opacity="0.1"/><polygon points="1738.0,1789.2 1750.0,1789.4 1762.0,1789.5 1774.0,1789.4 1786.0,1789.2 1798.0,1789.5 1810.0,1789.7 1822.0,1789.6 1834.0,1789.6 1846.0,1789.3 1858.0,1789.0 1870.0,1789.0 1882.0,1789.2 1894.0,1788.9 1906.0,1789.3 1918.0,1789.1 1930.0,1789.0 1942.0,1788.8 1954.0,1789.3 1966.0,1789.5 1978.0,1789.7 1990.0,1789.7 2002.0,1789.3 2014.0,1789.2 2026.0,1789.3 2038.0,1789.0 2050.0,1789.4 2062.0,1789.3 2074.0,1789.1 2086.0,1789.4 2098.0,1789.1 2110.0,1789.5 2122.0,1789.4 2134.0,1789.5 2146.0,1789.3 2158.0,1789.3 2170.0,1789.1 2182.0,1788.9 2194.0,1789.3 2206.0,1789.1 2218.0,1789.4 2230.0,1790.0 2242.0,1762.7 2254.0,1759.6 2266.0,1759.6 2278.0,1759.6 2290.0,1791.0 2302.0,1789.9 2314.0,1789.5 2326.0,1789.5 2338.0,1789.7 2350.0,1789.4 2362.0,1789.7 2374.0,1789.9 2386.0,1789.7 2398.0,1789.5 2410.0,1789.5 2422.0,1789.4 2434.0,1789.7 2446.0,1789.6 2458.0,1789.2 2470.0,1789.0 2482.0,1789.2 2494.0,1789.6 2506.0,1789.6 2518.0,1789.5 2530.0,1789.5 2542.0,1789.7 2554.0,1789.4 2566.0,1789.5 2578.0,1789.5 2590.0,1789.6 2602.0,1789.3 2614.0,1789.1 2626.0,1789.1 2638.0,1789.4 2650.0,1789.3 2662.0,1789.4 2674.0,1789.3 2686.0,1789.0 2698.0,1788.8 2710.0,1789.2 2722.0,1789.4 2734.0,1789.3 2746.0,1789.5 2758.0,1789.6 2770.0,1789.8 2782.0,1790.0 2794.0,1789.8 2806.0,1790.0 2818.0,1790.2 2830.0,1790.1 2842.0,1790.2 2854.0,1790.0 2866.0,1789.7 2878.0,1789.5 2890.0,1789.7 2902.0,1789.4 2914.0,1789.1 2926.0,1789.4 2938.0,1789.6 2950.0,1789.5 2962.0,1789.7 2974.0,1789.3 2986.0,1789.2 2998.0,1789.1 3010.0,1789.1 3022.0,1789.0 3034.0,1790.4 3046.0,1774.3 3058.0,1759.6 3070.0,1759.8 3082.0,1774.8 3094.0,1790.4 3106.0,1789.4 3118.0,1789.7 3130.0,1789.7 3142.0,1789.8 3154.0,1789.3 3166.0,1789.2 3166.0,1790.7 3154.0,1790.8 3142.0,1791.2 3130.0,1791.2 3118.0,1791.2 3106.0,1790.9 3094.0,1791.2 3082.0,1776.1 3070.0,1761.1 3058.0,1760.9 3046.0,1775.6 3034.0,1791.2 3022.0,1790.5 3010.0,1790.6 2998.0,1790.6 2986.0,1790.7 2974.0,1790.8 2962.0,1791.2 2950.0,1791.0 2938.0,1791.1 2926.0,1790.9 2914.0,1790.6 2902.0,1790.9 2890.0,1791.2 2878.0,1791.0 2866.0,1791.2 2854.0,1791.2 2842.0,1791.2 2830.0,1791.2 2818.0,1791.2 2806.0,1791.2 2794.0,1791.2 2782.0,1791.2 2770.0,1791.2 2758.0,1791.1 2746.0,1791.0 2734.0,1790.8 2722.0,1790.9 2710.0,1790.7 2698.0,1790.3 2686.0,1790.5 2674.0,1790.8 2662.0,1790.9 2650.0,1790.8 2638.0,1790.9 2626.0,1790.6 2614.0,1790.6 2602.0,1790.8 2590.0,1791.1 2578.0,1791.0 2566.0,1791.0 2554.0,1790.9 2542.0,1791.2 2530.0,1791.0 2518.0,1791.0 2506.0,1791.1 2494.0,1791.1 2482.0,1790.7 2470.0,1790.5 2458.0,1790.7 2446.0,1791.1 2434.0,1791.2 2422.0,1790.9 2410.0,1791.0 2398.0,1791.0 2386.0,1791.2 2374.0,1791.2 2362.0,1791.2 2350.0,1790.9 2338.0,1791.2 2326.0,1791.0 2314.0,1791.0 2302.0,1791.2 2290.0,1791.2 2278.0,1760.9 2266.0,1760.9 2254.0,1760.9 2242.0,1764.0 2230.0,1791.2 2218.0,1790.9 2206.0,1790.6 2194.0,1790.8 2182.0,1790.4 2170.0,1790.6 2158.0,1790.8 2146.0,1790.8 2134.0,1791.0 2122.0,1790.9 2110.0,1791.0 2098.0,1790.6 2086.0,1790.9 2074.0,1790.6 2062.0,1790.8 2050.0,1790.9 2038.0,1790.5 2026.0,1790.8 2014.0,1790.7 2002.0,1790.8 1990.0,1791.2 1978.0,1791.2 1966.0,1791.0 1954.0,1790.8 1942.0,1790.3 1930.0,1790.5 1918.0,1790.6 1906.0,1790.8 1894.0,1790.4 1882.0,1790.7 1870.0,1790.5 1858.0,1790.5 1846.0,1790.8 1834.0,1791.1 1822.0,1791.1 1810.0,1791.2 1798.0,1791.0 1786.0,1790.7 1774.0,1790.9 1762.0,1791.0 1750.0,1790.9 1738.0,1790.7" fill="#eab839" fill-opacity="0.1"/><polygon points="1738.0,1787.4 1750.0,1787.6 1762.0,1787.7 1774.0,1787.6 1786.0,1787.4 1798.0,1787.7 1810.0,1787.9 1822.0,1787.8 1834.0,1787.8 1846.0,1787.5 1858.0,1787.2 1870.0,1787.2 1882.0,1787.4 1894.0,1787.1 1906.0,1787.5 1918.0,1787.3 1930.0,1787.2 1942.0,1787.0 1954.0,1787.5 1966.0,1787.7 1978.0,1787.9 1990.0,1787.9 2002.0,1787.5 2014.0,1787.4 2026.0,1787.5 2038.0,1787.2 2050.0,1787.6 2062.0,1787.5 2074.0,1787.3 2086.0,1787.6 2098.0,1787.3 2110.0,1787.7 2122.0,1787.6 2134.0,1787.7 2146.0,1787.5 2158.0,1787.5 2170.0,1787.3 2182.0,1787.1 2194.0,1787.5 2206.0,1787.3 2218.0,1787.6 2230.0,1788.2 2242.0,1760.9 2254.0,1757.8 2266.0,1757.8 2278.0,1757.8 2290.0,1789.2 2302.0,1788.1 2314.0,1787.7 2326.0,1787.7 2338.0,1787.9 2350.0,1787.6 2362.0,1787.9 2374.0,1788.1 2386.0,1787.9 2398.0,1787.7 2410.0,1787.7 2422.0,1787.6 2434.0,1787.9 2446.0,1787.8 2458.0,1787.4 2470.0,1787.2 2482.0,1787.4 2494.0,1787.8 2506.0,1787.8 2518.0,1787.7 2530.0,1787.7 2542.0,1787.9 2554.0,1787.6 2566.0,1787.7 2578.0,1787.7 2590.0,1787.8 2602.0,1787.5 2614.0,1787.3 2626.0,1787.3 2638.0,1787.6 2650.0,1787.5 2662.0,1787.6 2674.0,1787.5 2686.0,1787.2 2698.0,1787.0 2710.0,1787.4 2722.0,1787.6 2734.0,1787.5 2746.0,1787.7 2758.0,1787.8 2770.0,1788.0 2782.0,1788.2 2794.0,1788.0 2806.0,1788.2 2818.0,1788.4 2830.0,1788.3 2842.0,1788.4 2854.0,1788.2 2866.0,1787.9 2878.0,1787.7 2890.0,1787.9 2902.0,1787.6 2914.0,1787.3 2926.0,1787.6 2938.0,1787.8 2950.0,1787.7 2962.0,1787.9 2974.0,1787.5 2986.0,1787.4 2998.0,1787.3 3010.0,1787.3 3022.0,1787.2 3034.0,1788.6 3046.0,1772.5 3058.0,1757.8 3070.0,1758.0 3082.0,1773.0 3094.0,1788.6 3106.0,1787.6 3118.0,1787.9 3130.0,1787.9 3142.0,1788.0 3154.0,1787.5 3166.0,1787.4 3166.0,1789.2 3154.0,1789.3 3142.0,1789.8 3130.0,1789.7 3118.0,1789.7 3106.0,1789.4 3094.0,1790.4 3082.0,1774.8 3070.0,1759.8 3058.0,1759.6 3046.0,1774.3 3034.0,1790.4 3022.0,1789.0 3010.0,1789.1 2998.0,1789.1 2986.0,1789.2 2974.0,1789.3 2962.0,1789.7 2950.0,1789.5 2938.0,1789.6 2926.0,1789.4 2914.0,1789.1 2902.0,1789.4 2890.0,1789.7 2878.0,1789.5 2866.0,1789.7 2854.0,1790.0 2842.0,1790.2 2830.0,1790.1 2818.0,1790.2 2806.0,1790.0 2794.0,1789.8 2782.0,1790.0 2770.0,1789.8 2758.0,1789.6 2746.0,1789.5 2734.0,1789.3 2722.0,1789.4 2710.0,1789.2 2698.0,1788.8 2686.0,1789.0 2674.0,1789.3 2662.0,1789.4 2650.0,1789.3 2638.0,1789.4 2626.0,1789.1 2614.0,1789.1 2602.0,1789.3 2590.0,1789.6 2578.0,1789.5 2566.0,1789.5 2554.0,1789.4 2542.0,1789.7 2530.0,1789.5 2518.0,1789.5 2506.0,1789.6 2494.0,1789.6 2482.0,1789.2 2470.0,1789.0 2458.0,1789.2 2446.0,1789.6 2434.0,1789.7 2422.0,1789.4 2410.0,1789.5 2398.0,1789.5 2386.0,1789.7 2374.0,1789.9 2362.0,1789.7 2350.0,1789.4 2338.0,1789.7 2326.0,1789.5 2314.0,1789.5 2302.0,1789.9 2290.0,1791.0 2278.0,1759.6 2266.0,1759.6 2254.0,1759.6 2242.0,1762.7 2230.0,1790.0 2218.0,1789.4 2206.0,1789.1 2194.0,1789.3 2182.0,1788.9 2170.0,1789.1 2158.0,1789.3 2146.0,1789.3 2134.0,1789.5 2122.0,1789.4 2110.0,1789.5 2098.0,1789.1 2086.0,1789.4 2074.0,1789.1 2062.0,1789.3 2050.0,1789.4 2038.0,1789.0 2026.0,1789.3 2014.0,1789.2 2002.0,1789.3 1990.0,1789.7 1978.0,1789.7 1966.0,1789.5 1954.0,1789.3 1942.0,1788.8 1930.0,1789.0 1918.0,1789.1 1906.0,1789.3 1894.0,1788.9 1882.0,1789.2 1870.0,1789.0 1858.0,1789.0 1846.0,1789.3 1834.0,1789.6 1822.0,1789.6 1810.0,1789.7 1798.0,1789.5 1786.0,1789.2 1774.0,1789.4 1762.0,1789.5 1750.0,1789.4 1738.0,1789.2" fill="#65bbe1" fill-opacity="0.1"/><polygon points="1738.0,1692.2 1739.4,1701.1 1751.4,1631.2 1763.4,1632.6 1775.4,1630.8 1787.4,1576.5 1799.4,1533.4 1811.4,1478.7 1823.4,1542.9 1835.4,1647.1 1847.4,1739.2 1859.4,1630.8 1871.4,1629.4 1883.4,1630.1 1895.4,1768.8 1907.4,1652.0 1919.4,1628.0 1931.1,1629.1 1943.1,1760.0 1955.1,1702.8 1967.1,1627.3 1979.1,1628.4 1991.1,1710.2 2003.1,1713.4 2015.1,1629.4 2027.1,1629.8 2039.1,1540.1 2051.1,1587.8 2063.1,1466.0 2075.1,1627.6 2087.1,1664.7 2099.1,1719.8 2111.1,1633.3 2123.1,1631.5 2135.1,1666.5 2147.1,1713.1 2159.1,1641.8 2171.1,1629.1 2183.1,1629.8 2195.1,1698.9 2207.1,1696.5 2219.1,1626.6 2231.1,1629.4 2243.1,1637.2 2255.1,1682.4 2267.1,1599.4 2279.1,1438.8 2291.1,1504.5 2303.1,1552.1 2315.1,1512.2 2327.1,1627.6 2339.1,1664.7 2351.1,1686.2 2363.1,1677.4 2375.1,1629.8 2387.1,1660.5 2399.1,1672.8 2411.1,1695.1 2422.6,1628.7 2434.6,1629.1 2446.6,1681.6 2458.6,1703.5 2470.6,1627.6 2482.6,1629.4 2494.6,1664.7 2506.6,1704.6 2518.6,1530.6 2530.6,1469.9 2542.6,1503.4 2554.6,1520.4 2566.6,1628.0 2578.6,1628.7 2590.6,1669.3 2602.6,1666.8 2614.6,1636.5 2626.6,1626.9 2638.2,1700.4 2650.2,1671.8 2662.2,1636.8 2674.2,1628.0 2686.2,1693.6 2698.2,1681.6 2710.2,1637.2 2722.2,1628.7 2734.2,1665.8 2746.2,1665.1 2758.2,1671.4 2770.2,1479.4 2782.2,1508.0 2794.2,1506.2 2806.2,1668.2 2818.2,1637.2 2830.2,1665.1 2842.2,1667.2 2854.2,1667.5 2866.2,1637.5 2878.2,1664.0 2890.2,1701.4 2902.2,1701.8 2914.2,1638.9 2926.2,1631.5 2938.2,1698.9 2950.2,1702.5 2962.2,1647.1 2974.2,1630.5 2986.2,1666.1 2998.2,1683.8 3010.2,1631.5 3022.2,1470.6 3034.2,1507.6 3046.2,1523.9 3058.2,1635.8 3070.2,1606.5 3082.2,1652.0 3094.2,1666.5 3106.2,1670.4 3118.2,1638.2 3130.2,1654.1 3142.2,1662.9 3154.2,1678.1 3165.5,1638.2 3166.0,1787.4 3154.0,1787.5 3142.0,1788.0 3130.0,1787.9 3118.0,1787.9 3106.0,1787.6 3094.0,1788.6 3082.0,1773.0 3070.0,1758.0 3058.0,1757.8 3046.0,1772.5 3034.0,1788.6 3022.0,1787.2 3010.0,1787.3 2998.0,1787.3 2986.0,1787.4 2974.0,1787.5 2962.0,1787.9 2950.0,1787.7 2938.0,1787.8 2926.0,1787.6 2914.0,1787.3 2902.0,1787.6 2890.0,1787.9 2878.0,1787.7 2866.0,1787.9 2854.0,1788.2 2842.0,1788.4 2830.0,1788.3 2818.0,1788.4 2806.0,1788.2 2794.0,1788.0 2782.0,1788.2 2770.0,1788.0 2758.0,1787.8 2746.0,1787.7 2734.0,1787.5 2722.0,1787.6 2710.0,1787.4 2698.0,1787.0 2686.0,1787.2 2674.0,1787.5 2662.0,1787.6 2650.0,1787.5 2638.0,1787.6 2626.0,1787.3 2614.0,1787.3 2602.0,1787.5 2590.0,1787.8 2578.0,1787.7 2566.0,1787.7 2554.0,1787.6 2542.0,1787.9 2530.0,1787.7 2518.0,1787.7 2506.0,1787.8 2494.0,1787.8 2482.0,1787.4 2470.0,1787.2 2458.0,1787.4 2446.0,1787.8 2434.0,1787.9 2422.0,1787.6 2410.0,1787.7 2398.0,1787.7 2386.0,1787.9 2374.0,1788.1 2362.0,1787.9 2350.0,1787.6 2338.0,1787.9 2326.0,1787.7 2314.0,1787.7 2302.0,1788.1 2290.0,1789.2 2278.0,1757.8 2266.0,1757.8 2254.0,1757.8 2242.0,1760.9 2230.0,1788.2 2218.0,1787.6 2206.0,1787.3 2194.0,1787.5 2182.0,1787.1 2170.0,1787.3 2158.0,1787.5 2146.0,1787.5 2134.0,1787.7 2122.0,1787.6 2110.0,1787.7 2098.0,1787.3 2086.0,1787.6 2074.0,1787.3 2062.0,1787.5 2050.0,1787.6 2038.0,1787.2 2026.0,1787.5 2014.0,1787.4 2002.0,1787.5 1990.0,1787.9 1978.0,1787.9 1966.0,1787.7 1954.0,1787.5 1942.0,1787.0 1930.0,1787.2 1918.0,1787.3 1906.0,1787.5 1894.0,1787.1 1882.0,1787.4 1870.0,1787.2 1858.0,1787.2 1846.0,1787.5 1834.0,1787.8 1822.0,1787.8 1810.0,1787.9 1798.0,1787.7 1786.0,1787.4 1774.0,1787.6 1762.0,1787.7 1750.0,1787.6 1738.0,1787.4" fill="#ef843c" fill-opacity="0.1"/><polyline points="1738.0,1790.7 1750.0,1790.9 1762.0,1791.0 1774.0,1790.9 1786.0,1790.7 1798.0,1791.0 1810.0,1791.2 1822.0,1791.1 1834.0,1791.1 1846.0,1790.8 1858.0,1790.5 1870.0,1790.5 1882.0,1790.7 1894.0,1790.4 1906.0,1790.8 1918.0,1790.6 1930.0,1790.5 1942.0,1790.3 1954.0,1790.8 1966.0,1791.0 1978.0,1791.2 1990.0,1791.2 2002.0,1790.8 2014.0,1790.7 2026.0,1790.8 2038.0,1790.5 2050.0,1790.9 2062.0,1790.8 2074.0,1790.6 2086.0,1790.9 2098.0,1790.6 2110.0,1791.0 2122.0,1790.9 2134.0,1791.0 2146.0,1790.8 2158.0,1790.8 2170.0,1790.6 2182.0,1790.4 2194.0,1790.8 2206.0,1790.6 2218.0,1790.9 2230.0,1791.2 2242.0,1764.0 2254.0,1760.9 2266.0,1760.9 2278.0,1760.9 2290.0,1791.2 2302.0,1791.2 2314.0,1791.0 2326.0,1791.0 2338.0,1791.2 2350.0,1790.9 2362.0,1791.2 2374.0,1791.2 2386.0,1791.2 2398.0,1791.0 2410.0,1791.0 2422.0,1790.9 2434.0,1791.2 2446.0,1791.1 2458.0,1790.7 2470.0,1790.5 2482.0,1790.7 2494.0,1791.1 2506.0,1791.1 2518.0,1791.0 2530.0,1791.0 2542.0,1791.2 2554.0,1790.9 2566.0,1791.0 2578.0,1791.0 2590.0,1791.1 2602.0,1790.8 2614.0,1790.6 2626.0,1790.6 2638.0,1790.9 2650.0,1790.8 2662.0,1790.9 2674.0,1790.8 2686.0,1790.5 2698.0,1790.3 2710.0,1790.7 2722.0,1790.9 2734.0,1790.8 2746.0,1791.0 2758.0,1791.1 2770.0,1791.2 2782.0,1791.2 2794.0,1791.2 2806.0,1791.2 2818.0,1791.2 2830.0,1791.2 2842.0,1791.2 2854.0,1791.2 2866.0,1791.2 2878.0,1791.0 2890.0,1791.2 2902.0,1790.9 2914.0,1790.6 2926.0,1790.9 2938.0,1791.1 2950.0,1791.0 2962.0,1791.2 2974.0,1790.8 2986.0,1790.7 2998.0,1790.6 3010.0,1790.6 3022.0,1790.5 3034.0,1791.2 3046.0,1775.6 3058.0,1760.9 3070.0,1761.1 3082.0,1776.1 3094.0,1791.2 3106.0,1790.9 3118.0,1791.2 3130.0,1791.2 3142.0,1791.2 3154.0,1790.8 3166.0,1790.7" fill="none" stroke="#7eb26d" stroke-width="2.1" stroke-linejoin="round"/><polyline points="1738.0,1789.2 1750.0,1789.4 1762.0,1789.5 1774.0,1789.4 1786.0,1789.2 1798.0,1789.5 1810.0,1789.7 1822.0,1789.6 1834.0,1789.6 1846.0,1789.3 1858.0,1789.0 1870.0,1789.0 1882.0,1789.2 1894.0,1788.9 1906.0,1789.3 1918.0,1789.1 1930.0,1789.0 1942.0,1788.8 1954.0,1789.3 1966.0,1789.5 1978.0,1789.7 1990.0,1789.7 2002.0,1789.3 2014.0,1789.2 2026.0,1789.3 2038.0,1789.0 2050.0,1789.4 2062.0,1789.3 2074.0,1789.1 2086.0,1789.4 2098.0,1789.1 2110.0,1789.5 2122.0,1789.4 2134.0,1789.5 2146.0,1789.3 2158.0,1789.3 2170.0,1789.1 2182.0,1788.9 2194.0,1789.3 2206.0,1789.1 2218.0,1789.4 2230.0,1790.0 2242.0,1762.7 2254.0,1759.6 2266.0,1759.6 2278.0,1759.6 2290.0,1791.0 2302.0,1789.9 2314.0,1789.5 2326.0,1789.5 2338.0,1789.7 2350.0,1789.4 2362.0,1789.7 2374.0,1789.9 2386.0,1789.7 2398.0,1789.5 2410.0,1789.5 2422.0,1789.4 2434.0,1789.7 2446.0,1789.6 2458.0,1789.2 2470.0,1789.0 2482.0,1789.2 2494.0,1789.6 2506.0,1789.6 2518.0,1789.5 2530.0,1789.5 2542.0,1789.7 2554.0,1789.4 2566.0,1789.5 2578.0,1789.5 2590.0,1789.6 2602.0,1789.3 2614.0,1789.1 2626.0,1789.1 2638.0,1789.4 2650.0,1789.3 2662.0,1789.4 2674.0,1789.3 2686.0,1789.0 2698.0,1788.8 2710.0,1789.2 2722.0,1789.4 2734.0,1789.3 2746.0,1789.5 2758.0,1789.6 2770.0,1789.8 2782.0,1790.0 2794.0,1789.8 2806.0,1790.0 2818.0,1790.2 2830.0,1790.1 2842.0,1790.2 2854.0,1790.0 2866.0,1789.7 2878.0,1789.5 2890.0,1789.7 2902.0,1789.4 2914.0,1789.1 2926.0,1789.4 2938.0,1789.6 2950.0,1789.5 2962.0,1789.7 2974.0,1789.3 2986.0,1789.2 2998.0,1789.1 3010.0,1789.1 3022.0,1789.0 3034.0,1790.4 3046.0,1774.3 3058.0,1759.6 3070.0,1759.8 3082.0,1774.8 3094.0,1790.4 3106.0,1789.4 3118.0,1789.7 3130.0,1789.7 3142.0,1789.8 3154.0,1789.3 3166.0,1789.2" fill="none" stroke="#eab839" stroke-width="2.1" stroke-linejoin="round"/><polyline points="1738.0,1787.4 1750.0,1787.6 1762.0,1787.7 1774.0,1787.6 1786.0,1787.4 1798.0,1787.7 1810.0,1787.9 1822.0,1787.8 1834.0,1787.8 1846.0,1787.5 1858.0,1787.2 1870.0,1787.2 1882.0,1787.4 1894.0,1787.1 1906.0,1787.5 1918.0,1787.3 1930.0,1787.2 1942.0,1787.0 1954.0,1787.5 1966.0,1787.7 1978.0,1787.9 1990.0,1787.9 2002.0,1787.5 2014.0,1787.4 2026.0,1787.5 2038.0,1787.2 2050.0,1787.6 2062.0,1787.5 2074.0,1787.3 2086.0,1787.6 2098.0,1787.3 2110.0,1787.7 2122.0,1787.6 2134.0,1787.7 2146.0,1787.5 2158.0,1787.5 2170.0,1787.3 2182.0,1787.1 2194.0,1787.5 2206.0,1787.3 2218.0,1787.6 2230.0,1788.2 2242.0,1760.9 2254.0,1757.8 2266.0,1757.8 2278.0,1757.8 2290.0,1789.2 2302.0,1788.1 2314.0,1787.7 2326.0,1787.7 2338.0,1787.9 2350.0,1787.6 2362.0,1787.9 2374.0,1788.1 2386.0,1787.9 2398.0,1787.7 2410.0,1787.7 2422.0,1787.6 2434.0,1787.9 2446.0,1787.8 2458.0,1787.4 2470.0,1787.2 2482.0,1787.4 2494.0,1787.8 2506.0,1787.8 2518.0,1787.7 2530.0,1787.7 2542.0,1787.9 2554.0,1787.6 2566.0,1787.7 2578.0,1787.7 2590.0,1787.8 2602.0,1787.5 2614.0,1787.3 2626.0,1787.3 2638.0,1787.6 2650.0,1787.5 2662.0,1787.6 2674.0,1787.5 2686.0,1787.2 2698.0,1787.0 2710.0,1787.4 2722.0,1787.6 2734.0,1787.5 2746.0,1787.7 2758.0,1787.8 2770.0,1788.0 2782.0,1788.2 2794.0,1788.0 2806.0,1788.2 2818.0,1788.4 2830.0,1788.3 2842.0,1788.4 2854.0,1788.2 2866.0,1787.9 2878.0,1787.7 2890.0,1787.9 2902.0,1787.6 2914.0,1787.3 2926.0,1787.6 2938.0,1787.8 2950.0,1787.7 2962.0,1787.9 2974.0,1787.5 2986.0,1787.4 2998.0,1787.3 3010.0,1787.3 3022.0,1787.2 3034.0,1788.6 3046.0,1772.5 3058.0,1757.8 3070.0,1758.0 3082.0,1773.0 3094.0,1788.6 3106.0,1787.6 3118.0,1787.9 3130.0,1787.9 3142.0,1788.0 3154.0,1787.5 3166.0,1787.4" fill="none" stroke="#65bbe1" stroke-width="2.1" stroke-linejoin="round"/><polyline points="1738.0,1692.2 1739.4,1701.1 1751.4,1631.2 1763.4,1632.6 1775.4,1630.8 1787.4,1576.5 1799.4,1533.4 1811.4,1478.7 1823.4,1542.9 1835.4,1647.1 1847.4,1739.2 1859.4,1630.8 1871.4,1629.4 1883.4,1630.1 1895.4,1768.8 1907.4,1652.0 1919.4,1628.0 1931.1,1629.1 1943.1,1760.0 1955.1,1702.8 1967.1,1627.3 1979.1,1628.4 1991.1,1710.2 2003.1,1713.4 2015.1,1629.4 2027.1,1629.8 2039.1,1540.1 2051.1,1587.8 2063.1,1466.0 2075.1,1627.6 2087.1,1664.7 2099.1,1719.8 2111.1,1633.3 2123.1,1631.5 2135.1,1666.5 2147.1,1713.1 2159.1,1641.8 2171.1,1629.1 2183.1,1629.8 2195.1,1698.9 2207.1,1696.5 2219.1,1626.6 2231.1,1629.4 2243.1,1637.2 2255.1,1682.4 2267.1,1599.4 2279.1,1438.8 2291.1,1504.5 2303.1,1552.1 2315.1,1512.2 2327.1,1627.6 2339.1,1664.7 2351.1,1686.2 2363.1,1677.4 2375.1,1629.8 2387.1,1660.5 2399.1,1672.8 2411.1,1695.1 2422.6,1628.7 2434.6,1629.1 2446.6,1681.6 2458.6,1703.5 2470.6,1627.6 2482.6,1629.4 2494.6,1664.7 2506.6,1704.6 2518.6,1530.6 2530.6,1469.9 2542.6,1503.4 2554.6,1520.4 2566.6,1628.0 2578.6,1628.7 2590.6,1669.3 2602.6,1666.8 2614.6,1636.5 2626.6,1626.9 2638.2,1700.4 2650.2,1671.8 2662.2,1636.8 2674.2,1628.0 2686.2,1693.6 2698.2,1681.6 2710.2,1637.2 2722.2,1628.7 2734.2,1665.8 2746.2,1665.1 2758.2,1671.4 2770.2,1479.4 2782.2,1508.0 2794.2,1506.2 2806.2,1668.2 2818.2,1637.2 2830.2,1665.1 2842.2,1667.2 2854.2,1667.5 2866.2,1637.5 2878.2,1664.0 2890.2,1701.4 2902.2,1701.8 2914.2,1638.9 2926.2,1631.5 2938.2,1698.9 2950.2,1702.5 2962.2,1647.1 2974.2,1630.5 2986.2,1666.1 2998.2,1683.8 3010.2,1631.5 3022.2,1470.6 3034.2,1507.6 3046.2,1523.9 3058.2,1635.8 3070.2,1606.5 3082.2,1652.0 3094.2,1666.5 3106.2,1670.4 3118.2,1638.2 3130.2,1654.1 3142.2,1662.9 3154.2,1678.1 3165.5,1638.2" fill="none" stroke="#ef843c" stroke-width="2.1" stroke-linejoin="round"/></g>
<rect x="1687.1" y="1906.6" width="21.8" height="2.8" rx="1.4" fill="#7eb26d"/>
<rect x="1687.1" y="1956.6" width="21.8" height="2.8" rx="1.4" fill="#eab839"/>
<rect x="1687.1" y="2006.6" width="21.8" height="2.8" rx="1.4" fill="#65bbe1"/>
<rect x="1687.1" y="2056.6" width="21.8" height="2.8" rx="1.4" fill="#ef843c"/>
</svg>
<div id="txt">
<div class="t" style="font-size:27.99px;line-height:31px;color:#414750;transform:translate(333.16px,231.82px) scaleX(1.0142);-webkit-text-stroke:1.15px #414750;">Controllers</div>
<div class="t" style="font-size:27.99px;line-height:31px;color:#414750;transform:translate(1130.65px,231.82px) scaleX(0.9691);-webkit-text-stroke:1.15px #414750;">Work Queue</div>
<div class="t" style="font-size:27.99px;line-height:31px;color:#414750;transform:translate(1956.98px,231.82px) scaleX(1.0262);-webkit-text-stroke:1.15px #414750;">Memory</div>
<div class="t" style="font-size:27.99px;line-height:31px;color:#414750;transform:translate(2730.81px,231.82px) scaleX(0.9776);-webkit-text-stroke:1.15px #414750;">API Requests</div>
<div class="t" style="font-size:27.99px;line-height:31px;color:#414750;transform:translate(586.28px,687.82px);-webkit-text-stroke:1.15px #414750;">Kubernetes API Requests Duration</div>
<div class="t" style="font-size:27.99px;line-height:31px;color:#414750;transform:translate(2252.14px,687.82px) scaleX(0.9933);-webkit-text-stroke:1.15px #414750;">Kubernetes API Requests</div>
<div class="t" style="font-size:27.99px;line-height:31px;color:#414750;transform:translate(734.02px,1295.83px) scaleX(0.9458);-webkit-text-stroke:1.15px #414750;">CPU Usage</div>
<div class="t" style="font-size:27.99px;line-height:31px;color:#414750;transform:translate(2316.73px,1295.83px);-webkit-text-stroke:1.15px #414750;">Memory Usage</div>
<div class="t" style="font-size:37.40px;line-height:42px;color:#414750;transform:translate(77.89px,25.10px) scaleX(0.9588);-webkit-text-stroke:0.60px #414750;">GitOps Toolkit Control Plane</div>
<div class="t" style="font-size:27.96px;line-height:31px;color:#7b8087;transform:translate(2735.81px,27.85px) scaleX(1.0245);-webkit-text-stroke:1.10px #7b8087;">Last 30 minutes</div>
<div class="t" style="font-size:22.59px;line-height:25px;color:#429be0;transform:translate(43.44px,148.80px) scaleX(1.0709);-webkit-text-stroke:1.01px #429be0;">namespace</div>
<div class="t" style="font-size:27.37px;line-height:31px;color:#414750;transform:translate(212.23px,146.18px) scaleX(1.0483);-webkit-text-stroke:0.45px #414750;">gitops-system</div>
<div class="t" style="font-size:31.68px;line-height:36px;color:#414750;transform:translate(58.28px,608.15px) scaleX(0.9846);-webkit-text-stroke:1.30px #414750;">Resource Usage</div>
<div class="t" style="font-size:107.39px;line-height:120px;color:#3274d9;transform:translate(1125.30px,363.95px) scaleX(0.9411);-webkit-text-stroke:3.30px #3274d9;">9</div>
<div class="t" style="font-size:62.93px;line-height:70px;color:#3274d9;transform:translate(1292.21px,405.60px) scaleX(0.9899);-webkit-text-stroke:2.20px #3274d9;">s</div>
<div class="t" style="font-size:44.99px;line-height:51px;color:#3274d9;transform:translate(1946.71px,477.90px) scaleX(0.9969);-webkit-text-stroke:1.80px #3274d9;">42.5 Mb</div>
<div class="t" style="font-size:22.49px;line-height:25px;color:#414750;transform:translate(47.40px,753.82px) scaleX(1.0300);-webkit-text-stroke:0.37px #414750;">150 ms</div>
<div class="t" style="font-size:22.49px;line-height:25px;color:#414750;transform:translate(47.40px,849.82px) scaleX(1.0300);-webkit-text-stroke:0.37px #414750;">100 ms</div>
<div class="t" style="font-size:22.49px;line-height:25px;color:#414750;transform:translate(60.28px,945.82px) scaleX(1.0300);-webkit-text-stroke:0.37px #414750;">50 ms</div>
<div class="t" style="font-size:22.49px;line-height:25px;color:#414750;transform:translate(79.57px,1043.62px) scaleX(1.0300);-webkit-text-stroke:0.37px #414750;">0 ns</div>
<div class="t" style="font-size:22.49px;line-height:25px;color:#414750;transform:translate(165.82px,1069.92px) scaleX(1.0334);-webkit-text-stroke:0.37px #414750;">15:05</div>
<div class="t" style="font-size:22.49px;line-height:25px;color:#414750;transform:translate(405.03px,1069.92px) scaleX(1.0321);-webkit-text-stroke:0.37px #414750;">15:10</div>
<div class="t" style="font-size:22.49px;line-height:25px;color:#414750;transform:translate(644.22px,1069.92px) scaleX(1.0334);-webkit-text-stroke:0.37px #414750;">15:15</div>
<div class="t" style="font-size:22.49px;line-height:25px;color:#414750;transform:translate(883.43px,1069.92px) scaleX(1.0321);-webkit-text-stroke:0.37px #414750;">15:20</div>
<div class="t" style="font-size:22.49px;line-height:25px;color:#414750;transform:translate(1122.62px,1069.92px) scaleX(1.0334);-webkit-text-stroke:0.37px #414750;">15:25</div>
<div class="t" style="font-size:22.49px;line-height:25px;color:#414750;transform:translate(1361.83px,1069.92px) scaleX(1.0321);-webkit-text-stroke:0.37px #414750;">15:30</div>
<div class="t" style="font-size:22.59px;line-height:25px;color:#429be0;transform:translate(1416.33px,1115.50px) scaleX(1.0562);-webkit-text-stroke:1.01px #429be0;">avg</div>
<div class="t" style="font-size:22.59px;line-height:25px;color:#429be0;transform:translate(1494.12px,1115.50px) scaleX(1.0679);-webkit-text-stroke:1.01px #429be0;">current</div>
<div class="t" style="font-size:23.46px;line-height:26px;color:#414750;transform:translate(119.44px,1158.61px) scaleX(1.0150);-webkit-text-stroke:0.38px #414750;">P50</div>
<div class="t" style="font-size:23.46px;line-height:26px;color:#414750;transform:translate(1402.23px,1158.61px) scaleX(1.0274);-webkit-text-stroke:0.38px #414750;">5 ms</div>
<div class="t" style="font-size:23.46px;line-height:26px;color:#414750;transform:translate(1518.03px,1158.61px) scaleX(1.0274);-webkit-text-stroke:0.38px #414750;">5 ms</div>
<div class="t" style="font-size:23.46px;line-height:26px;color:#414750;transform:translate(119.43px,1208.61px) scaleX(1.0205);-webkit-text-stroke:0.38px #414750;">P99</div>
<div class="t" style="font-size:23.46px;line-height:26px;color:#414750;transform:translate(1388.47px,1208.61px) scaleX(1.0331);-webkit-text-stroke:0.38px #414750;">48 ms</div>
<div class="t" style="font-size:23.46px;line-height:26px;color:#414750;transform:translate(1504.57px,1208.61px) scaleX(1.0284);-webkit-text-stroke:0.38px #414750;">43 ms</div>
<div class="t" style="font-size:22.49px;line-height:25px;color:#414750;transform:translate(1654.41px,753.82px) scaleX(1.0300);-webkit-text-stroke:0.37px #414750;">15</div>
<div class="t" style="font-size:22.49px;line-height:25px;color:#414750;transform:translate(1654.34px,849.82px) scaleX(1.0300);-webkit-text-stroke:0.37px #414750;">10</div>
<div class="t" style="font-size:22.49px;line-height:25px;color:#414750;transform:translate(1667.28px,945.82px) scaleX(1.0300);-webkit-text-stroke:0.37px #414750;">5</div>
<div class="t" style="font-size:22.49px;line-height:25px;color:#414750;transform:translate(1667.21px,1043.62px) scaleX(1.0300);-webkit-text-stroke:0.37px #414750;">0</div>
<div class="t" style="font-size:22.49px;line-height:25px;color:#414750;transform:translate(1725.82px,1069.92px) scaleX(1.0334);-webkit-text-stroke:0.37px #414750;">15:05</div>
<div class="t" style="font-size:22.49px;line-height:25px;color:#414750;transform:translate(1973.03px,1069.92px) scaleX(1.0321);-webkit-text-stroke:0.37px #414750;">15:10</div>
<div class="t" style="font-size:22.49px;line-height:25px;color:#414750;transform:translate(2220.22px,1069.92px) scaleX(1.0334);-webkit-text-stroke:0.37px #414750;">15:15</div>
<div class="t" style="font-size:22.49px;line-height:25px;color:#414750;transform:translate(2467.43px,1069.92px) scaleX(1.0321);-webkit-text-stroke:0.37px #414750;">15:20</div>
<div class="t" style="font-size:22.49px;line-height:25px;color:#414750;transform:translate(2714.62px,1069.92px) scaleX(1.0334);-webkit-text-stroke:0.37px #414750;">15:25</div>
<div class="t" style="font-size:22.49px;line-height:25px;color:#414750;transform:translate(2961.83px,1069.92px) scaleX(1.0321);-webkit-text-stroke:0.37px #414750;">15:30</div>
<div class="t" style="font-size:22.59px;line-height:25px;color:#429be0;transform:translate(3041.83px,1115.50px) scaleX(1.0562);-webkit-text-stroke:1.01px #429be0;">avg</div>
<div class="t" style="font-size:22.59px;line-height:25px;color:#429be0;transform:translate(3101.92px,1115.50px) scaleX(1.0679);-webkit-text-stroke:1.01px #429be0;">current</div>
<div class="t" style="font-size:23.46px;line-height:26px;color:#414750;transform:translate(1729.03px,1158.61px) scaleX(1.0647);-webkit-text-stroke:0.38px #414750;">total</div>
<div class="t" style="font-size:23.46px;line-height:26px;color:#414750;transform:translate(3033.57px,1158.61px) scaleX(1.0123);-webkit-text-stroke:0.38px #414750;">4.74</div>
<div class="t" style="font-size:23.46px;line-height:26px;color:#414750;transform:translate(3131.87px,1158.61px) scaleX(1.0079);-webkit-text-stroke:0.38px #414750;">4.44</div>
<div class="t" style="font-size:23.46px;line-height:26px;color:#414750;transform:translate(1728.41px,1208.61px);-webkit-text-stroke:0.38px #414750;">errors</div>
<div class="t" style="font-size:23.46px;line-height:26px;color:#414750;transform:translate(3033.89px,1208.61px) scaleX(0.9772);-webkit-text-stroke:0.38px #414750;">0.01</div>
<div class="t" style="font-size:23.46px;line-height:26px;color:#414750;transform:translate(3164.55px,1208.61px) scaleX(1.0410);-webkit-text-stroke:0.38px #414750;">0</div>
<div class="t" style="font-size:22.49px;line-height:25px;color:#414750;transform:translate(47.20px,1361.42px) scaleX(1.0300);-webkit-text-stroke:0.37px #414750;">500 ms</div>
<div class="t" style="font-size:22.49px;line-height:25px;color:#414750;transform:translate(47.20px,1444.02px) scaleX(1.0300);-webkit-text-stroke:0.37px #414750;">400 ms</div>
<div class="t" style="font-size:22.49px;line-height:25px;color:#414750;transform:translate(47.20px,1527.82px) scaleX(1.0300);-webkit-text-stroke:0.37px #414750;">300 ms</div>
<div class="t" style="font-size:22.49px;line-height:25px;color:#414750;transform:translate(47.20px,1611.82px) scaleX(1.0300);-webkit-text-stroke:0.37px #414750;">200 ms</div>
<div class="t" style="font-size:22.49px;line-height:25px;color:#414750;transform:translate(47.20px,1695.62px) scaleX(1.0300);-webkit-text-stroke:0.37px #414750;">100 ms</div>
<div class="t" style="font-size:22.49px;line-height:25px;color:#414750;transform:translate(79.37px,1779.62px) scaleX(1.0300);-webkit-text-stroke:0.37px #414750;">0 ns</div>
<div class="t" style="font-size:22.49px;line-height:25px;color:#414750;transform:translate(165.82px,1805.92px) scaleX(1.0334);-webkit-text-stroke:0.37px #414750;">15:05</div>
<div class="t" style="font-size:22.49px;line-height:25px;color:#414750;transform:translate(405.03px,1805.92px) scaleX(1.0321);-webkit-text-stroke:0.37px #414750;">15:10</div>
<div class="t" style="font-size:22.49px;line-height:25px;color:#414750;transform:translate(644.22px,1805.92px) scaleX(1.0334);-webkit-text-stroke:0.37px #414750;">15:15</div>
<div class="t" style="font-size:22.49px;line-height:25px;color:#414750;transform:translate(883.43px,1805.92px) scaleX(1.0321);-webkit-text-stroke:0.37px #414750;">15:20</div>
<div class="t" style="font-size:22.49px;line-height:25px;color:#414750;transform:translate(1122.62px,1805.92px) scaleX(1.0334);-webkit-text-stroke:0.37px #414750;">15:25</div>
<div class="t" style="font-size:22.49px;line-height:25px;color:#414750;transform:translate(1361.83px,1805.92px) scaleX(1.0321);-webkit-text-stroke:0.37px #414750;">15:30</div>
<div class="t" style="font-size:22.59px;line-height:25px;color:#429be0;transform:translate(1402.03px,1851.50px) scaleX(1.0562);-webkit-text-stroke:1.01px #429be0;">avg</div>
<div class="t" style="font-size:22.59px;line-height:25px;color:#429be0;transform:translate(1494.22px,1851.50px) scaleX(1.0679);-webkit-text-stroke:1.01px #429be0;">current</div>
<div class="t" style="font-size:23.46px;line-height:26px;color:#414750;transform:translate(119.73px,1894.61px) scaleX(1.0273);-webkit-text-stroke:0.38px #414750;">helm-controller-57f9b56bbf-k24mk</div>
<div class="t" style="font-size:23.46px;line-height:26px;color:#414750;transform:translate(1387.93px,1894.61px) scaleX(1.0274);-webkit-text-stroke:0.38px #414750;">5 ms</div>
<div class="t" style="font-size:23.46px;line-height:26px;color:#414750;transform:translate(1517.87px,1894.61px) scaleX(1.0327);-webkit-text-stroke:0.38px #414750;">4 ms</div>
<div class="t" style="font-size:23.46px;line-height:26px;color:#414750;transform:translate(119.79px,1944.61px) scaleX(1.0248);-webkit-text-stroke:0.38px #414750;">kustomize-controller-6c6784b468-7kzfp</div>
<div class="t" style="font-size:23.46px;line-height:26px;color:#414750;transform:translate(1387.93px,1944.61px) scaleX(1.0274);-webkit-text-stroke:0.38px #414750;">5 ms</div>
<div class="t" style="font-size:23.46px;line-height:26px;color:#414750;transform:translate(1518.13px,1944.61px) scaleX(1.0274);-webkit-text-stroke:0.38px #414750;">5 ms</div>
<div class="t" style="font-size:23.46px;line-height:26px;color:#414750;transform:translate(119.80px,1994.61px) scaleX(1.0284);-webkit-text-stroke:0.38px #414750;">notification-controller-6d56575dc-5w9n9</div>
<div class="t" style="font-size:23.46px;line-height:26px;color:#414750;transform:translate(1387.47px,1994.61px) scaleX(1.0365);-webkit-text-stroke:0.38px #414750;">3 ms</div>
<div class="t" style="font-size:23.46px;line-height:26px;color:#414750;transform:translate(1517.67px,1994.61px) scaleX(1.0365);-webkit-text-stroke:0.38px #414750;">3 ms</div>
<div class="t" style="font-size:23.46px;line-height:26px;color:#414750;transform:translate(120.75px,2044.61px) scaleX(1.0192);-webkit-text-stroke:0.38px #414750;">source-controller-7fb84fc985-zvsz8</div>
<div class="t" style="font-size:23.46px;line-height:26px;color:#414750;transform:translate(1360.58px,2044.61px) scaleX(1.0345);-webkit-text-stroke:0.38px #414750;">236 ms</div>
<div class="t" style="font-size:23.46px;line-height:26px;color:#414750;transform:translate(1490.38px,2044.61px) scaleX(1.0398);-webkit-text-stroke:0.38px #414750;">247 ms</div>
<div class="t" style="font-size:22.49px;line-height:25px;color:#414750;transform:translate(1654.24px,1361.40px) scaleX(1.0300);-webkit-text-stroke:0.37px #414750;">57 MiB</div>
<div class="t" style="font-size:22.49px;line-height:25px;color:#414750;transform:translate(1654.24px,1431.12px) scaleX(1.0300);-webkit-text-stroke:0.37px #414750;">48 MiB</div>
<div class="t" style="font-size:22.49px;line-height:25px;color:#414750;transform:translate(1654.24px,1500.84px) scaleX(1.0300);-webkit-text-stroke:0.37px #414750;">38 MiB</div>
<div class="t" style="font-size:22.49px;line-height:25px;color:#414750;transform:translate(1654.24px,1570.56px) scaleX(1.0300);-webkit-text-stroke:0.37px #414750;">29 MiB</div>
<div class="t" style="font-size:22.49px;line-height:25px;color:#414750;transform:translate(1654.24px,1640.28px) scaleX(1.0300);-webkit-text-stroke:0.37px #414750;">19 MiB</div>
<div class="t" style="font-size:22.49px;line-height:25px;color:#414750;transform:translate(1654.24px,1710.00px) scaleX(1.0300);-webkit-text-stroke:0.37px #414750;">10 MiB</div>
<div class="t" style="font-size:22.49px;line-height:25px;color:#414750;transform:translate(1691.55px,1779.72px) scaleX(1.0300);-webkit-text-stroke:0.37px #414750;">0 B</div>
<div class="t" style="font-size:22.49px;line-height:25px;color:#414750;transform:translate(1769.82px,1806.02px) scaleX(1.0334);-webkit-text-stroke:0.37px #414750;">15:05</div>
<div class="t" style="font-size:22.49px;line-height:25px;color:#414750;transform:translate(2009.53px,1806.02px) scaleX(1.0321);-webkit-text-stroke:0.37px #414750;">15:10</div>
<div class="t" style="font-size:22.49px;line-height:25px;color:#414750;transform:translate(2249.22px,1806.02px) scaleX(1.0334);-webkit-text-stroke:0.37px #414750;">15:15</div>
<div class="t" style="font-size:22.49px;line-height:25px;color:#414750;transform:translate(2488.93px,1806.02px) scaleX(1.0321);-webkit-text-stroke:0.37px #414750;">15:20</div>
<div class="t" style="font-size:22.49px;line-height:25px;color:#414750;transform:translate(2728.62px,1806.02px) scaleX(1.0334);-webkit-text-stroke:0.37px #414750;">15:25</div>
<div class="t" style="font-size:22.49px;line-height:25px;color:#414750;transform:translate(2968.33px,1806.02px) scaleX(1.0321);-webkit-text-stroke:0.37px #414750;">15:30</div>
<div class="t" style="font-size:22.59px;line-height:25px;color:#429be0;transform:translate(2987.83px,1851.50px) scaleX(1.0562);-webkit-text-stroke:1.01px #429be0;">avg</div>
<div class="t" style="font-size:22.59px;line-height:25px;color:#429be0;transform:translate(3101.72px,1851.50px) scaleX(1.0679);-webkit-text-stroke:1.01px #429be0;">current</div>
<div class="t" style="font-size:23.46px;line-height:26px;color:#414750;transform:translate(1727.73px,1894.61px) scaleX(1.0273);-webkit-text-stroke:0.38px #414750;">helm-controller-57f9b56bbf-k24mk</div>
<div class="t" style="font-size:23.46px;line-height:26px;color:#414750;transform:translate(2924.60px,1894.61px);-webkit-text-stroke:0.38px #414750;">360.5 KiB</div>
<div class="t" style="font-size:23.46px;line-height:26px;color:#414750;transform:translate(3075.90px,1894.61px) scaleX(1.0059);-webkit-text-stroke:0.38px #414750;">129.4 KiB</div>
<div class="t" style="font-size:23.46px;line-height:26px;color:#414750;transform:translate(1727.79px,1944.61px) scaleX(1.0248);-webkit-text-stroke:0.38px #414750;">kustomize-controller-6c6784b468-7kzfp</div>
<div class="t" style="font-size:23.46px;line-height:26px;color:#414750;transform:translate(2924.32px,1944.61px) scaleX(1.0027);-webkit-text-stroke:0.38px #414750;">284.7 KiB</div>
<div class="t" style="font-size:23.46px;line-height:26px;color:#414750;transform:translate(3076.80px,1944.61px) scaleX(0.9969);-webkit-text-stroke:0.38px #414750;">302.4 KiB</div>
<div class="t" style="font-size:23.46px;line-height:26px;color:#414750;transform:translate(1727.80px,1994.61px) scaleX(1.0284);-webkit-text-stroke:0.38px #414750;">notification-controller-6d56575dc-5w9n9</div>
<div class="t" style="font-size:23.46px;line-height:26px;color:#414750;transform:translate(2937.49px,1994.61px);-webkit-text-stroke:0.38px #414750;">76.6 KiB</div>
<div class="t" style="font-size:23.46px;line-height:26px;color:#414750;transform:translate(3089.39px,1994.61px);-webkit-text-stroke:0.38px #414750;">76.6 KiB</div>
<div class="t" style="font-size:23.46px;line-height:26px;color:#414750;transform:translate(1728.75px,2044.61px) scaleX(1.0192);-webkit-text-stroke:0.38px #414750;">source-controller-7fb84fc985-zvsz8</div>
<div class="t" style="font-size:23.46px;line-height:26px;color:#414750;transform:translate(2932.00px,2044.61px) scaleX(1.0190);-webkit-text-stroke:0.38px #414750;">21.0 MiB</div>
<div class="t" style="font-size:23.46px;line-height:26px;color:#414750;transform:translate(3083.80px,2044.61px) scaleX(1.0201);-webkit-text-stroke:0.38px #414750;">20.6 MiB</div>
</div>
</body></html>
